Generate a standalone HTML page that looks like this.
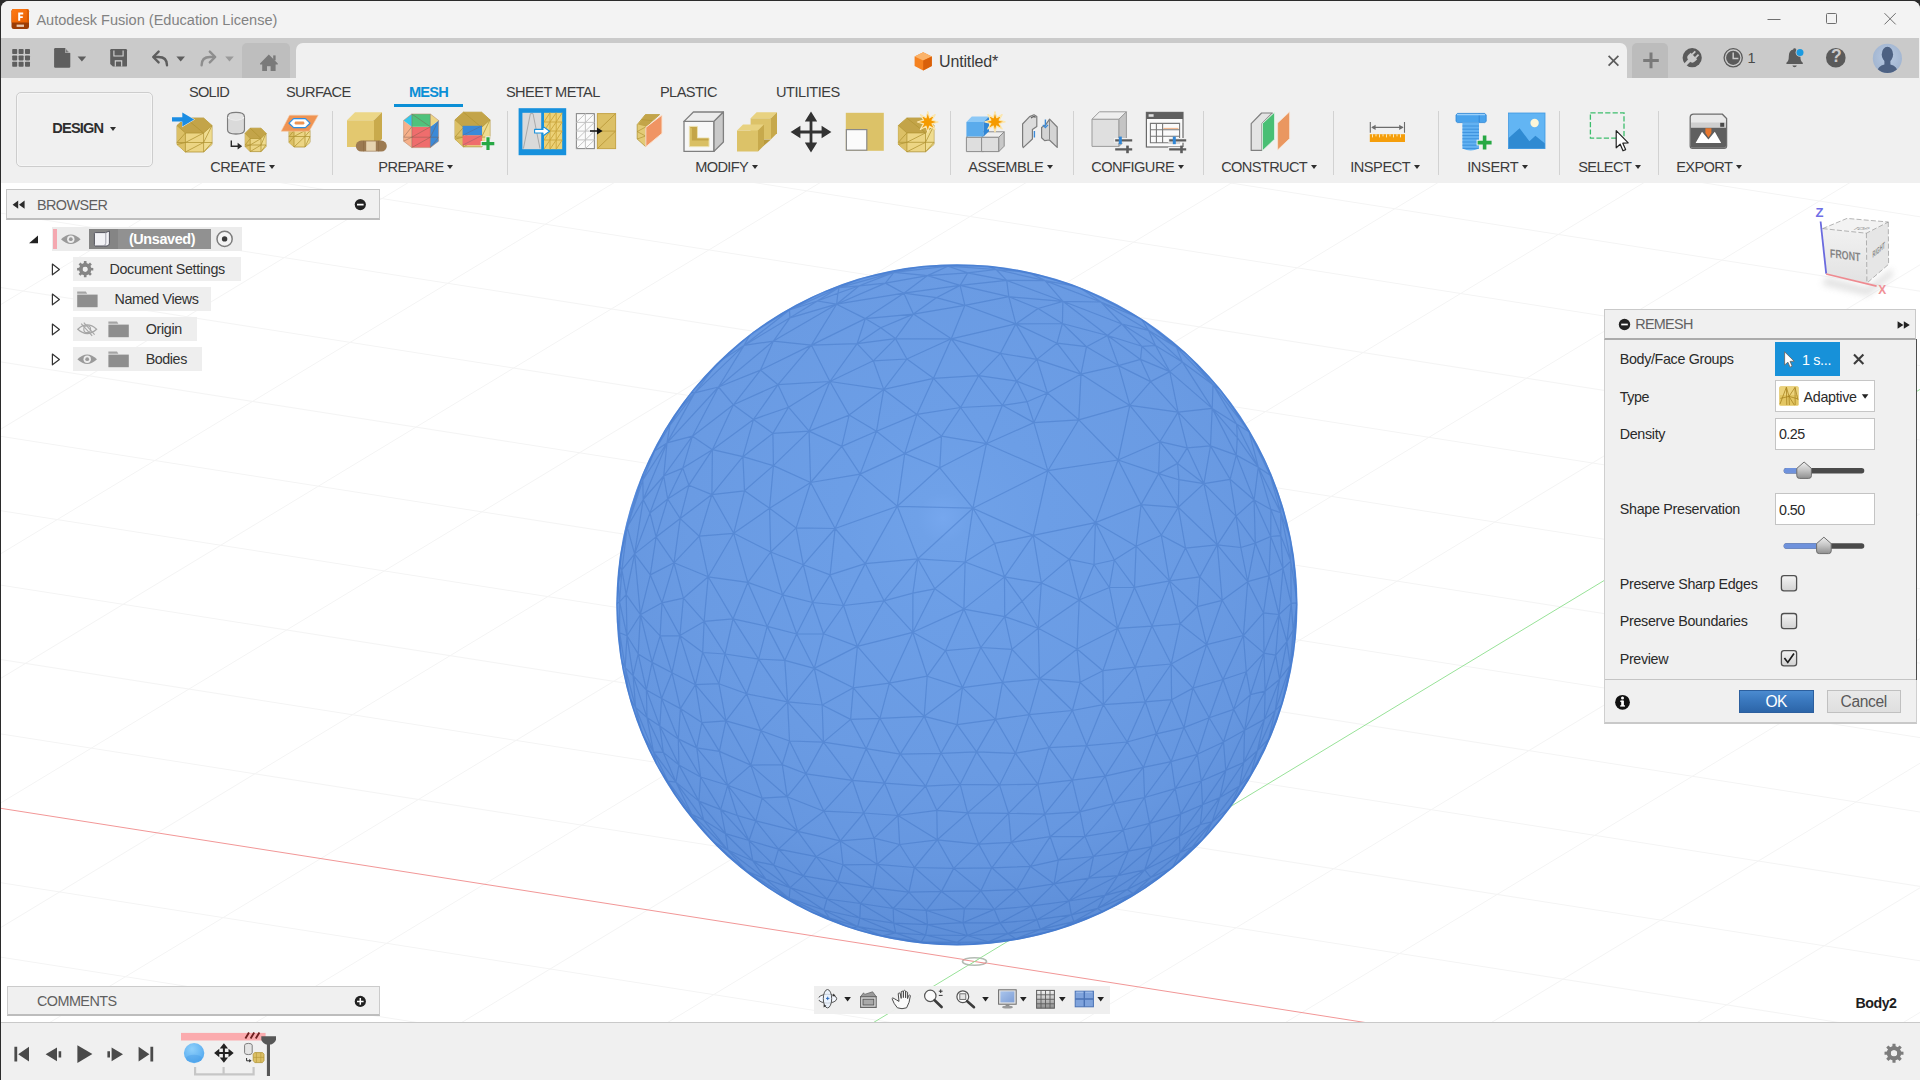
<!DOCTYPE html>
<html><head><meta charset="utf-8"><title>Autodesk Fusion</title>
<style>
*{box-sizing:border-box;margin:0;padding:0}
html,body{width:1920px;height:1080px;overflow:hidden;background:#2b2b2b;font-family:"Liberation Sans",sans-serif;}
#win{position:absolute;left:1px;top:1px;width:1919px;height:1079px;background:#f0f0f0;border-radius:8px 8px 0 0;overflow:hidden}
.abs{position:absolute}
#title{left:0;top:0;width:1920px;height:38px;background:#f3f3f3}
#title .t{left:36.4px;top:11.8px;font-size:14.55px;color:#828282;white-space:nowrap}
#qat{left:0;top:38px;width:1918.5px;height:40px;background:#cacaca}
#tab{left:296px;top:5px;width:1331px;height:35px;background:#f0f0f0;border-radius:7px 7px 0 0}
#ribbon{left:0;top:0;width:1920px;height:183px;background:transparent}
#ribbonbg{left:0;top:78px;width:1920px;height:105px;background:#f0f0f0}
#canvas{left:0;top:183px;width:1920px;height:840px;background:#fff}
#bottom{left:0;top:1022px;width:1920px;height:58px;background:#f0f0f0;border-top:1px solid #c9c9c9}
.rt{position:absolute;top:8px;font-size:14.5px;color:#3c3c3c;white-space:nowrap;letter-spacing:-0.2px}
.gl{position:absolute;top:82px;font-size:14.5px;color:#3c3c3c;white-space:nowrap;letter-spacing:-0.2px}
.gl i{display:inline-block;width:0;height:0;border-left:3.5px solid transparent;border-right:3.5px solid transparent;border-top:5px solid #333;margin-left:4px;vertical-align:2px}
.sep{position:absolute;top:34px;width:1px;height:63px;background:#cfcfcf}
</style></head><body>
<div id="win"><div id="o" class="abs" style="left:-1px;top:-1px;width:1920px;height:1080px">
<div id="title" class="abs"><div class="t abs">Autodesk Fusion (Education License)</div>
<svg class="abs" style="left:0;top:0" width="1920" height="38" viewBox="0 0 1920 38">
<defs><linearGradient id="fo" x1="0" y1="0" x2="1" y2="1"><stop offset="0" stop-color="#ff7a14"/><stop offset="1" stop-color="#e85f00"/></linearGradient></defs>
<rect x="11.5" y="9" width="17.5" height="20" rx="2.2" fill="#9c3d06"/>
<path d="M13.7 9H26.8Q29 9 29 11.2V22.6H11.5V11.2Q11.5 9 13.7 9Z" fill="url(#fo)"/>
<path d="M26.5 9.4Q28.6 9.6 28.7 12V22.6H27.3V11.5Z" fill="#c85200" opacity=".7"/>
<path d="M18.2 12.6H23.2V14.4H20.2V16.2H22.8V17.9H20.2V20.8H18.2Z" fill="#fff"/>
<rect x="16.6" y="24.6" width="7.4" height="2.3" fill="#f3d9c4" opacity=".9"/>
<path d="M1767.5 19.5H1780.5" stroke="#6f6f6f" stroke-width="1"/>
<rect x="1826.5" y="13.5" width="10" height="10" rx="1" fill="none" stroke="#6f6f6f" stroke-width="1"/>
<path d="M1884.5 13.2L1895.7 24.4M1895.7 13.2L1884.5 24.4" stroke="#6f6f6f" stroke-width="1"/>
</svg>

</div>
<div id="qat" class="abs"><div id="tab" class="abs"></div>
<div class="abs" style="left:242px;top:5px;width:48px;height:35px;background:#bebebe;border-radius:5px 5px 0 0"></div>
<div class="abs" style="left:1632px;top:5px;width:36px;height:35px;background:#bcbcbc;border-radius:5px 5px 0 0"></div>
<svg class="abs" style="left:0;top:0" width="1920" height="40" viewBox="0 38 1920 40">
<!-- grid -->
<g fill="#5e5e5e">
<rect x="12.2" y="49" width="5" height="5" rx=".8"/><rect x="18.6" y="49" width="5" height="5" rx=".8"/><rect x="25" y="49" width="5" height="5" rx=".8"/>
<rect x="12.2" y="55.4" width="5" height="5" rx=".8"/><rect x="18.6" y="55.4" width="5" height="5" rx=".8"/><rect x="25" y="55.4" width="5" height="5" rx=".8"/>
<rect x="12.2" y="61.8" width="5" height="5" rx=".8"/><rect x="18.6" y="61.8" width="5" height="5" rx=".8"/><rect x="25" y="61.8" width="5" height="5" rx=".8"/>
</g>
<!-- file -->
<path d="M55.3 48H65L70.3 53.3V66.6Q70.3 67.8 69.1 67.8H55.3Q54.1 67.8 54.1 66.6V49.2Q54.1 48 55.3 48Z" fill="#5e5e5e"/>
<path d="M65.4 48.2V53H70.2Z" fill="#cacaca"/><path d="M66 49.6V52.4H68.9Z" fill="#7a7a7a"/>
<path d="M77.6 56.6H86.2L81.9 61.4Z" fill="#5e5e5e"/>
<!-- save -->
<path d="M111.4 49H125.8Q127 49 127 50.2V65.4Q127 66.6 125.800 66.6H112.9L110.2 63.9V50.2Q110.2 49 111.4 49Z" fill="#5e5e5e"/>
<path d="M113.9 50.4V56H123.1V50.4" fill="none" stroke="#d4d4d4" stroke-width="1.1"/>
<path d="M115.3 66.4V60.9H121.7V66.4" fill="none" stroke="#d4d4d4" stroke-width="1.1"/>
<!-- undo -->
<path d="M167 65.2Q167 57 158.5 57H154" fill="none" stroke="#5e5e5e" stroke-width="2.4" stroke-linecap="round"/>
<path d="M158.6 51.6L153.2 57L158.6 62.4" fill="none" stroke="#5e5e5e" stroke-width="2.4" stroke-linecap="round" stroke-linejoin="round"/>
<path d="M176.4 56.6H185L180.7 61.4Z" fill="#5e5e5e"/>
<!-- redo -->
<path d="M201.6 65.2Q201.6 57 210 57H214" fill="none" stroke="#8e8e8e" stroke-width="2.4" stroke-linecap="round"/>
<path d="M209.8 51.6L215.2 57L209.8 62.4" fill="none" stroke="#8e8e8e" stroke-width="2.4" stroke-linecap="round" stroke-linejoin="round"/>
<path d="M225.2 56.6H233.8L229.5 61.4Z" fill="#9a9a9a"/>
<!-- home -->
<path d="M260 63.6L268.8 54.6L277.8 63.6V64.6H275.6V71H262.2V64.6H260Z" fill="#7a7a7a"/>
<rect x="273.2" y="55.4" width="2.4" height="5" fill="#7a7a7a"/>
<rect x="267" y="66.2" width="3.6" height="4.8" fill="#bebebe"/>
<!-- tab cube -->
<path d="M923.2 52.2L931.8 56.4V66L923.2 70.4L914.6 66V56.4Z" fill="#f58220"/>
<path d="M923.2 52.2L931.8 56.4L923.2 60.6L914.6 56.4Z" fill="#fbb36a"/>
<path d="M923.2 60.6L931.8 56.4V66L923.2 70.4Z" fill="#d9600a"/>
<!-- close x -->
<path d="M1608.6 55.8L1618.4 65.6M1618.4 55.8L1608.6 65.6" stroke="#5c5c5c" stroke-width="1.7"/>
<!-- plus -->
<path d="M1643.2 60.4H1658.8M1651 52.6V68.2" stroke="#7a7a7a" stroke-width="3"/>
<!-- extension -->
<circle cx="1692.2" cy="57.7" r="9.6" fill="#5a5a5a"/>
<g transform="rotate(45 1692.2 57.7)" fill="#cacaca">
<path d="M1687.6 55.2H1696.8V58.6Q1696.8 62.2 1692.2 62.2Q1687.6 62.2 1687.6 58.6Z"/>
<rect x="1689" y="51" width="1.8" height="4.6"/><rect x="1693.6" y="51" width="1.8" height="4.6"/>
<rect x="1690.6" y="61.6" width="3.2" height="8"/>
</g>
<!-- clock -->
<circle cx="1733.2" cy="57.8" r="9.1" fill="none" stroke="#5a5a5a" stroke-width="1.3"/>
<circle cx="1733.2" cy="57.8" r="7.1" fill="#5a5a5a"/>
<path d="M1733.2 52.4V58.6H1738.4" fill="none" stroke="#cacaca" stroke-width="1.5"/>
<!-- bell -->
<path d="M1794.6 48.2Q1796 48.2 1796 49.6Q1800.4 50.8 1800.4 56.4Q1800.4 61 1802.8 62.8V64H1786.4V62.8Q1788.8 61 1788.8 56.4Q1788.8 50.8 1793.2 49.6Q1793.2 48.2 1794.6 48.2Z" fill="#5a5a5a"/>
<path d="M1792.4 65.4H1796.8Q1796.4 67.2 1794.6 67.2Q1792.8 67.2 1792.4 65.4Z" fill="#5a5a5a"/>
<circle cx="1800" cy="52.4" r="4.4" fill="#cacaca"/><circle cx="1800" cy="52.4" r="3.5" fill="#1b9ae0"/>
<!-- help -->
<circle cx="1835.8" cy="57.8" r="9.8" fill="#5a5a5a"/>
<!-- avatar -->
<defs><clipPath id="avc"><circle cx="1887.4" cy="58.4" r="14.6"/></clipPath><radialGradient id="avg" cx=".5" cy=".45" r=".6"><stop offset="0" stop-color="#b9cae2"/><stop offset="1" stop-color="#9fb3cf"/></radialGradient></defs>
<circle cx="1887.4" cy="58.4" r="14.6" fill="url(#avg)"/>
<g clip-path="url(#avc)" fill="#4d6182"><ellipse cx="1887.4" cy="54.4" rx="5.7" ry="7.6"/><path d="M1884.4 59H1890.4V64.4Q1897.4 65.6 1898.4 74H1876.4Q1877.4 65.6 1884.4 64.4Z"/></g>
</svg>
<div class="abs" style="left:939px;top:15.2px;font-size:16px;color:#3a3a3a;letter-spacing:-0.15px">Untitled*</div>
<div class="abs" style="left:1747.5px;top:11.5px;font-size:14.5px;color:#4a4a4a">1</div>
<div class="abs" style="left:1831.1px;top:8.2px;font-size:17.5px;font-weight:bold;color:#cacaca">?</div>

</div>
<div id="ribbonbg" class="abs"></div><div id="ribbon" class="abs">
<div class="abs" style="left:188.9px;top:84px;font-size:14.6px;line-height:16px;color:#3c3c3c;letter-spacing:-0.703px;white-space:nowrap">SOLID</div>
<div class="abs" style="left:285.9px;top:84px;font-size:14.6px;line-height:16px;color:#3c3c3c;letter-spacing:-0.609px;white-space:nowrap">SURFACE</div>
<div class="abs" style="left:408.9px;top:84px;font-size:14.6px;line-height:16px;font-weight:bold;color:#0b8fd6;letter-spacing:-0.796px;white-space:nowrap">MESH</div>
<div class="abs" style="left:505.9px;top:84px;font-size:14.6px;line-height:16px;color:#3c3c3c;letter-spacing:-0.551px;white-space:nowrap">SHEET METAL</div>
<div class="abs" style="left:659.9px;top:84px;font-size:14.6px;line-height:16px;color:#3c3c3c;letter-spacing:-0.550px;white-space:nowrap">PLASTIC</div>
<div class="abs" style="left:775.9px;top:84px;font-size:14.6px;line-height:16px;color:#3c3c3c;letter-spacing:-0.460px;white-space:nowrap">UTILITIES</div>
<div class="abs" style="left:394px;top:103.5px;width:69px;height:3.5px;background:#0b8fd6"></div>
<div class="abs" style="left:16px;top:91.5px;width:137px;height:75px;border:1px solid #cdcdcd;border-radius:5px;background:#f0f0f0;box-shadow:0 0 0 1px #f6f6f6 inset"></div>
<div class="abs" style="left:52.3px;top:120px;font-size:14.6px;line-height:16px;font-weight:bold;color:#2e2e2e;letter-spacing:-0.830px">DESIGN</div>
<div class="abs" style="left:109.5px;top:126.5px;width:0;height:0;border-left:3.5px solid transparent;border-right:3.5px solid transparent;border-top:4.5px solid #2e2e2e"></div>
<div class="abs" style="left:210.2px;top:159px;font-size:14.6px;line-height:16px;color:#3c3c3c;letter-spacing:-0.523px;white-space:nowrap">CREATE</div>
<div class="abs" style="left:268.6px;top:164.5px;width:0;height:0;border-left:3.4px solid transparent;border-right:3.4px solid transparent;border-top:4.6px solid #2e2e2e"></div>
<div class="abs" style="left:378.2px;top:159px;font-size:14.6px;line-height:16px;color:#3c3c3c;letter-spacing:-0.457px;white-space:nowrap">PREPARE</div>
<div class="abs" style="left:447.1px;top:164.5px;width:0;height:0;border-left:3.4px solid transparent;border-right:3.4px solid transparent;border-top:4.6px solid #2e2e2e"></div>
<div class="abs" style="left:695.2px;top:159px;font-size:14.6px;line-height:16px;color:#3c3c3c;letter-spacing:-0.629px;white-space:nowrap">MODIFY</div>
<div class="abs" style="left:751.6px;top:164.5px;width:0;height:0;border-left:3.4px solid transparent;border-right:3.4px solid transparent;border-top:4.6px solid #2e2e2e"></div>
<div class="abs" style="left:968.2px;top:159px;font-size:14.6px;line-height:16px;color:#3c3c3c;letter-spacing:-0.464px;white-space:nowrap">ASSEMBLE</div>
<div class="abs" style="left:1046.6px;top:164.5px;width:0;height:0;border-left:3.4px solid transparent;border-right:3.4px solid transparent;border-top:4.6px solid #2e2e2e"></div>
<div class="abs" style="left:1091.2px;top:159px;font-size:14.6px;line-height:16px;color:#3c3c3c;letter-spacing:-0.511px;white-space:nowrap">CONFIGURE</div>
<div class="abs" style="left:1177.6px;top:164.5px;width:0;height:0;border-left:3.4px solid transparent;border-right:3.4px solid transparent;border-top:4.6px solid #2e2e2e"></div>
<div class="abs" style="left:1221.2px;top:159px;font-size:14.6px;line-height:16px;color:#3c3c3c;letter-spacing:-0.628px;white-space:nowrap">CONSTRUCT</div>
<div class="abs" style="left:1310.6px;top:164.5px;width:0;height:0;border-left:3.4px solid transparent;border-right:3.4px solid transparent;border-top:4.6px solid #2e2e2e"></div>
<div class="abs" style="left:1350.2px;top:159px;font-size:14.6px;line-height:16px;color:#3c3c3c;letter-spacing:-0.468px;white-space:nowrap">INSPECT</div>
<div class="abs" style="left:1413.6px;top:164.5px;width:0;height:0;border-left:3.4px solid transparent;border-right:3.4px solid transparent;border-top:4.6px solid #2e2e2e"></div>
<div class="abs" style="left:1467.2px;top:159px;font-size:14.6px;line-height:16px;color:#3c3c3c;letter-spacing:-0.379px;white-space:nowrap">INSERT</div>
<div class="abs" style="left:1521.6px;top:164.5px;width:0;height:0;border-left:3.4px solid transparent;border-right:3.4px solid transparent;border-top:4.6px solid #2e2e2e"></div>
<div class="abs" style="left:1578.2px;top:159px;font-size:14.6px;line-height:16px;color:#3c3c3c;letter-spacing:-0.633px;white-space:nowrap">SELECT</div>
<div class="abs" style="left:1634.6px;top:164.5px;width:0;height:0;border-left:3.4px solid transparent;border-right:3.4px solid transparent;border-top:4.6px solid #2e2e2e"></div>
<div class="abs" style="left:1676.2px;top:159px;font-size:14.6px;line-height:16px;color:#3c3c3c;letter-spacing:-0.628px;white-space:nowrap">EXPORT</div>
<div class="abs" style="left:1735.6px;top:164.5px;width:0;height:0;border-left:3.4px solid transparent;border-right:3.4px solid transparent;border-top:4.6px solid #2e2e2e"></div>
<div class="abs" style="left:331.9px;top:111px;width:1.3px;height:64px;background:#d2d2d2"></div>
<div class="abs" style="left:506.7px;top:111px;width:1.3px;height:64px;background:#d2d2d2"></div>
<div class="abs" style="left:950.2px;top:111px;width:1.3px;height:64px;background:#d2d2d2"></div>
<div class="abs" style="left:1072.7px;top:111px;width:1.3px;height:64px;background:#d2d2d2"></div>
<div class="abs" style="left:1202.9px;top:111px;width:1.3px;height:64px;background:#d2d2d2"></div>
<div class="abs" style="left:1333.0px;top:111px;width:1.3px;height:64px;background:#d2d2d2"></div>
<div class="abs" style="left:1438.0px;top:111px;width:1.3px;height:64px;background:#d2d2d2"></div>
<div class="abs" style="left:1559.0px;top:111px;width:1.3px;height:64px;background:#d2d2d2"></div>
<div class="abs" style="left:1658.0px;top:111px;width:1.3px;height:64px;background:#d2d2d2"></div><svg class="abs" style="left:0;top:0" width="1920" height="183" viewBox="0 0 1920 183">
<path d="M177.0 125.5L185.4 118.0L203.6 118.0L212.0 125.5L212.0 144.5L203.6 152.0L185.4 152.0L177.0 144.5Z" fill="#ecd584" stroke="#b39535" stroke-width=".8" stroke-linejoin="round"/><path d="M177.0 125.5L185.4 118.0L203.6 118.0L212.0 125.5L203.6 133.0L185.4 133.0Z" fill="#c3a449"/><path d="M177.0 125.5L185.4 133.0L185.4 152.0L177.0 144.5Z" fill="#dcc066"/><path d="M212.0 125.5L203.6 133.0L203.6 152.0L212.0 144.5Z" fill="#f3e19b" opacity=".55"/><path d="M185.4 133.0L185.4 152.0M203.6 133.0L203.6 152.0M177.0 142.5L212.0 142.5M185.4 142.5L203.6 133.0M185.4 152.0L203.6 142.5M177.0 142.5L185.4 133.0M177.0 144.5L185.4 142.5M203.6 142.5L212.0 125.5M203.6 152.0L212.0 142.5M185.4 133.0L203.6 133.0M185.4 118.0L203.6 133.0M177.0 125.5L185.4 133.0M212.0 125.5L203.6 133.0" fill="none" stroke="#b39535" stroke-width=".8"/>
<path d="M171.5 117H182V111.8L195 119.4L182 127.2V121.8H171.5Z" fill="#f0f0f0"/>
<path d="M172 117.3H182.3V112.6L194.2 119.5L182.3 126.5V121.6H172Z" fill="#1b8de3"/>
<path d="M227.6 116.5V130Q227.6 134 236 134Q244.4 134 244.4 130V116.5Q244.4 112.4 236 112.4Q227.6 112.4 227.6 116.5Z" fill="#e4e4e4" stroke="#7d7d7d" stroke-width="1.3"/>
<path d="M228.3 117Q228.3 120.6 236 120.6Q243.7 120.6 243.7 117" fill="none" stroke="#f7f7f7" stroke-width="1.2"/>
<path d="M228.6 117V129.6Q229 133 236 133Q243 133 243.4 129.6V117Q243.4 120.4 236 120.4Q228.6 120.4 228.6 117Z" fill="#dadada"/>
<path d="M245.2 133.3L250.2 128.2L261.0 128.2L266.0 133.3L266.0 146.5L261.0 151.6L250.2 151.6L245.2 146.5Z" fill="#ecd584" stroke="#b39535" stroke-width=".8" stroke-linejoin="round"/><path d="M245.2 133.3L250.2 128.2L261.0 128.2L266.0 133.3L261.0 138.5L250.2 138.5Z" fill="#c3a449"/><path d="M245.2 133.3L250.2 138.5L250.2 151.6L245.2 146.5Z" fill="#dcc066"/><path d="M266.0 133.3L261.0 138.5L261.0 151.6L266.0 146.5Z" fill="#f3e19b" opacity=".55"/><path d="M250.2 138.5L250.2 151.6M261.0 138.5L261.0 151.6M245.2 145.0L266.0 145.0M250.2 145.0L261.0 138.5M250.2 151.6L261.0 145.0M245.2 145.0L250.2 138.5M245.2 146.5L250.2 145.0M261.0 145.0L266.0 133.3M261.0 151.6L266.0 145.0M250.2 138.5L261.0 138.5M250.2 128.2L261.0 138.5M245.2 133.3L250.2 138.5M266.0 133.3L261.0 138.5" fill="none" stroke="#b39535" stroke-width=".8"/>
<path d="M231.3 140.6V146.2H238.6" fill="none" stroke="#2b2b2b" stroke-width="1.4"/><path d="M237.6 142.8L242.2 146.2L237.6 149.6Z" fill="#2b2b2b"/>
<path d="M289.0 130.6L294.0 126.0L305.0 126.0L310.0 130.6L310.0 142.4L305.0 147.0L294.0 147.0L289.0 142.4Z" fill="#ecd584" stroke="#b39535" stroke-width=".8" stroke-linejoin="round"/><path d="M289.0 130.6L294.0 130.6L294.0 147.0L289.0 142.4Z" fill="#dcc066"/><path d="M310.0 130.6L305.0 130.6L305.0 147.0L310.0 142.4Z" fill="#f3e19b" opacity=".55"/><path d="M294.0 130.6L294.0 147.0M305.0 130.6L305.0 147.0M289.0 136.5L310.0 136.5M294.0 136.5L305.0 130.6M294.0 147.0L305.0 136.5M289.0 136.5L294.0 130.6M289.0 142.4L294.0 136.5M305.0 136.5L310.0 130.6M305.0 147.0L310.0 136.5" fill="none" stroke="#b39535" stroke-width=".8"/>
<path d="M289.5 115.2H318.2L309.2 131.2H281.2Z" fill="#ef9352" stroke="#f6c9a3" stroke-width=".6"/>
<path d="M289 123.2L293.6 118.6H305.4L310 123.2L305.4 127.6H293.6Z" fill="#fff" stroke="#2f8de0" stroke-width="1.2" stroke-linejoin="round"/>
<rect x="294.6" y="121.6" width="9.8" height="3" rx="1.4" fill="#ef9352"/>
<path d="M347.0 120.2L374.0 120.2L374.0 147.0L347.0 147.0Z" fill="#e3c86f"/><path d="M347.0 120.2L355.0 112.2L382.0 112.2L374.0 120.2Z" fill="#ecd788"/><path d="M374.0 120.2L382.0 112.2L382.0 139.0L374.0 147.0Z" fill="#c9aa4c"/>
<rect x="355.8" y="140.6" width="31" height="11" rx="5.5" fill="#9c7a52"/><rect x="366.2" y="141.4" width="9.6" height="9.4" fill="#e6d3b0"/>
<path d="M363.6 140.8V151.4M378.6 140.8V151.4" stroke="#8a6940" stroke-width="1" opacity=".6"/>
<path d="M411.8 126.8L430.4 126.8L430.4 147.6L411.8 147.6Z" fill="#ef6d6d"/>
<path d="M403.6 120.4L411.8 126.8L411.8 147.6L403.6 141.2Z" fill="#f6b08a"/>
<path d="M438.6 120.4L430.4 126.8L430.4 147.6L438.6 141.2Z" fill="#3b8ad8"/>
<path d="M411.8 114.0L430.4 114.0L430.4 126.8L411.8 126.8Z" fill="#4fc27c"/>
<path d="M403.6 120.4L411.8 114.0L411.8 126.8Z" fill="#35c6ea"/>
<path d="M438.6 120.4L430.4 114.0L430.4 126.8Z" fill="#ecd584"/>
<path d="M411.8 114.0L430.4 126.8M403.6 137.2H438.6M411.8 137.2L430.4 126.8M411.8 147.6L430.4 137.2M403.6 137.2L411.8 126.8M403.6 141.2L411.8 137.2M430.4 137.2L438.6 120.4M430.4 147.6L438.6 137.2M411.8 114.0V147.6M430.4 114.0V147.6" fill="none" stroke="#7a5a4a" stroke-opacity=".55" stroke-width=".8"/>
<path d="M403.6 120.4L411.8 114.0L430.4 114.0L438.6 120.4L438.6 141.2L430.4 147.6L411.8 147.6L403.6 141.2Z" fill="none" stroke="#b98a6a" stroke-opacity=".7" stroke-width=".8"/>
<path d="M455.0 119.8L463.4 112.2L481.6 112.2L490.0 119.8L490.0 139.2L481.6 146.8L463.4 146.8L455.0 139.2Z" fill="#ecd584" stroke="#b39535" stroke-width=".8" stroke-linejoin="round"/><path d="M455.0 119.8L463.4 112.2L481.6 112.2L490.0 119.8L481.6 127.4L463.4 127.4Z" fill="#c3a449"/><path d="M455.0 119.8L463.4 127.4L463.4 146.8L455.0 139.2Z" fill="#dcc066"/><path d="M490.0 119.8L481.6 127.4L481.6 146.8L490.0 139.2Z" fill="#f3e19b" opacity=".55"/><path d="M463.4 127.4L463.4 146.8M481.6 127.4L481.6 146.8M455.0 137.1L490.0 137.1M463.4 137.1L481.6 127.4M463.4 146.8L481.6 137.1M455.0 137.1L463.4 127.4M455.0 139.2L463.4 137.1M481.6 137.1L490.0 119.8M481.6 146.8L490.0 137.1M463.4 127.4L481.6 127.4M463.4 112.2L481.6 127.4M455.0 119.8L463.4 127.4M490.0 119.8L481.6 127.4" fill="none" stroke="#b39535" stroke-width=".8"/>
<rect x="462.6" y="125.8" width="19.4" height="9.6" fill="#3b8ad8"/><rect x="462.6" y="135.4" width="19.4" height="9.8" fill="#ef6d6d"/>
<path d="M462.6 135.4L482 125.8M462.6 145.2L482 135.4" stroke="#6a5a6a" stroke-opacity=".45" stroke-width=".8"/>
<path d="M480.7 143.6H495.3M488.0 136.3V150.9" stroke="#f0f0f0" stroke-width="5.2"/><path d="M481.7 143.6H494.3M488.0 137.3V149.9" stroke="#27a844" stroke-width="3.2"/>
<rect x="518.6" y="108.2" width="47.6" height="47" fill="#1791dd"/>
<rect x="522.4" y="112.8" width="18.8" height="36.4" fill="#dadada"/><rect x="544" y="112.8" width="18.2" height="36.4" fill="#ecd177"/>
<path d="M523.4 148.6L530.4 113.6H533L540 148.6" fill="none" stroke="#a9a9a9" stroke-width="1"/>
<path d="M550 112.8V149.2M556.2 112.8V149.2M544 122H562.2M544 131H562.2M544 140H562.2M544 122L550 112.8M550 122L556.2 112.8M556.2 122L562.2 112.8M544 131L550 122M550 131L556.2 122M556.2 131L562.2 122M544 140L550 131M550 140L556.2 131M556.2 140L562.2 131M544 149.2L550 140M550 149.2L556.2 140M556.2 149.2L562.2 140" stroke="#c9a53c" stroke-width=".9" fill="none"/>
<path d="M534.6 129.4H543V126.4L549.6 131.2L543 136V133H534.6Z" fill="#fff" stroke="#1791dd" stroke-width="1.1" stroke-linejoin="round"/>
<rect x="576.4" y="113.6" width="18" height="35" fill="#fbfbfb" stroke="#8c8c8c" stroke-width="1.1"/>
<path d="M585.4 113.6V148.6M576.4 122.4H594.4M576.4 131.1H594.4M576.4 139.9H594.4M576.4 122.4L585.4 113.6M585.4 122.4L594.4 113.6M576.4 131.1L585.4 122.4M585.4 131.1L594.4 122.4M576.4 139.9L585.4 131.1M585.4 139.9L594.4 131.1M576.4 148.6L585.4 139.9M585.4 148.6L594.4 139.9" stroke="#bdbdbd" stroke-width=".9" fill="none"/>
<rect x="597.4" y="113.6" width="18.2" height="35" fill="#dcc066" stroke="#c5a548" stroke-width="1"/>
<path d="M597.4 131.1H615.6M597.4 131.1L615.6 113.6M597.4 148.6L615.6 131.1" stroke="#bb9a3a" stroke-width=".9" fill="none"/>
<path d="M590 131.1H598" stroke="#111" stroke-width="1.5"/><path d="M597 127.6L602.6 131.1L597 134.6Z" fill="#111"/>
<path d="M637.2 124.6L645.4 114.6L659.6 114.6L645.6 127.0L645.6 146.6L637.2 139.0Z" fill="#e3cb76" stroke="#b39535" stroke-width=".8" stroke-linejoin="round"/>
<path d="M645.4 114.8L659.0 114.8L646.0 126.6L638.0 124.4Z" fill="#c3a449"/>
<path d="M637.2 131.6L645.6 136M637.2 131.6L645.6 127M637.2 139L645.6 136M641.4 119.6L652.4 120.6" stroke="#b39535" stroke-width=".7" fill="none"/>
<path d="M645.8 127.4L662.0 115.0L662.0 133.4L645.8 146.8Z" fill="#f09463" stroke="#fbe3cf" stroke-width="1" stroke-linejoin="round"/>
<path d="M684.0 121.4L714.0 121.4L714.0 151.4L684.0 151.4Z" fill="#f7f7f7" stroke="#7f7f7f" stroke-width="1.3" stroke-linejoin="round"/><path d="M684.0 121.4L693.4 112.0L723.4 112.0L714.0 121.4Z" fill="#ececec" stroke="#7f7f7f" stroke-width="1.3" stroke-linejoin="round"/><path d="M714.0 121.4L723.4 112.0L723.4 142.0L714.0 151.4Z" fill="#c9c9c9" stroke="#7f7f7f" stroke-width="1.3" stroke-linejoin="round"/>
<path d="M689.4 126.4L697.4 126.4L697.4 138.0L709.0 138.0L709.0 146.6L689.4 146.6Z" fill="#d9bf63" stroke="#eadfae" stroke-width="1"/>
<path d="M689.9 126.9L696.9 126.9L696.9 138.5L708.5 138.5L708.5 140.5L691.9 140.5L691.9 128.5Z" fill="#c4a548"/>
<path d="M750.6 118.2L771.0 118.2L771.0 139.2L750.6 139.2Z" fill="#dcc268"/><path d="M750.6 118.2L756.6 112.2L777.0 112.2L771.0 118.2Z" fill="#e8d281"/><path d="M771.0 118.2L777.0 112.2L777.0 133.2L771.0 139.2Z" fill="#c7a94c"/>
<path d="M737.0 130.6L758.0 130.6L758.0 151.6L737.0 151.6Z" fill="#dcc268"/><path d="M737.0 130.6L743.0 124.6L764.0 124.6L758.0 130.6Z" fill="#e8d281"/><path d="M758.0 130.6L764.0 124.6L764.0 145.6L758.0 151.6Z" fill="#c7a94c"/>
<path d="M764 139.4H771L764 145.6Z" fill="#b99a3e"/>
<path d="M811 118V146M797 132H825" stroke="#333" stroke-width="2.8"/>
<path d="M811 111.6L817.2 121.4H804.8ZM811 152.4L817.2 142.6H804.8ZM790.6 132L800.4 125.8V138.2ZM831.4 132L821.6 125.8V138.2Z" fill="#333"/>
<rect x="845.8" y="112.8" width="38" height="38" fill="#dcc268"/>
<rect x="846.4" y="129.6" width="20.4" height="20.6" fill="#fbfbfb" stroke="#8a8a8a" stroke-width="1.2"/>
<path d="M898.4 125.4L906.9 118.0L925.5 118.0L934.0 125.4L934.0 144.4L925.5 151.8L906.9 151.8L898.4 144.4Z" fill="#ecd584" stroke="#b39535" stroke-width=".8" stroke-linejoin="round"/><path d="M898.4 125.4L906.9 118.0L925.5 118.0L934.0 125.4L925.5 132.9L906.9 132.9Z" fill="#c3a449"/><path d="M898.4 125.4L906.9 132.9L906.9 151.8L898.4 144.4Z" fill="#dcc066"/><path d="M934.0 125.4L925.5 132.9L925.5 151.8L934.0 144.4Z" fill="#f3e19b" opacity=".55"/><path d="M906.9 132.9L906.9 151.8M925.5 132.9L925.5 151.8M898.4 142.3L934.0 142.3M906.9 142.3L925.5 132.9M906.9 151.8L925.5 142.3M898.4 142.3L906.9 132.9M898.4 144.4L906.9 142.3M925.5 142.3L934.0 125.4M925.5 151.8L934.0 142.3M906.9 132.9L925.5 132.9M906.9 118.0L925.5 132.9M898.4 125.4L906.9 132.9M934.0 125.4L925.5 132.9" fill="none" stroke="#b39535" stroke-width=".8"/>
<path d="M927.8 111.6L929.6 117.8L935.2 114.6L932.0 120.2L938.2 122.0L932.0 123.8L935.2 129.4L929.6 126.2L927.8 132.4L926.0 126.2L920.4 129.4L923.6 123.8L917.4 122.0L923.6 120.2L920.4 114.6L926.0 117.8Z" fill="#f59a00" stroke="#fbe7b0" stroke-width="1.2" stroke-linejoin="round"/>
<path d="M966.4 137.2L983.6 137.2L983.6 151.6L966.4 151.6Z" fill="#dedede" stroke="#8c8c8c" stroke-width="1" stroke-linejoin="round"/><path d="M966.4 137.2L971.8 131.8L989.0 131.8L983.6 137.2Z" fill="#efefef" stroke="#8c8c8c" stroke-width="1" stroke-linejoin="round"/><path d="M983.6 137.2L989.0 131.8L989.0 146.2L983.6 151.6Z" fill="#c8c8c8" stroke="#8c8c8c" stroke-width="1" stroke-linejoin="round"/>
<path d="M981.6 137.2L998.8 137.2L998.8 151.6L981.6 151.6Z" fill="#dedede" stroke="#8c8c8c" stroke-width="1" stroke-linejoin="round"/><path d="M981.6 137.2L987.0 131.8L1004.2 131.8L998.8 137.2Z" fill="#efefef" stroke="#8c8c8c" stroke-width="1" stroke-linejoin="round"/><path d="M998.8 137.2L1004.2 131.8L1004.2 146.2L998.8 151.6Z" fill="#c8c8c8" stroke="#8c8c8c" stroke-width="1" stroke-linejoin="round"/>
<path d="M966.4 122.0L983.6 122.0L983.6 136.6L966.4 136.6Z" fill="#5aabec"/><path d="M966.4 122.0L971.8 116.6L989.0 116.6L983.6 122.0Z" fill="#8cc8f6"/><path d="M983.6 122.0L989.0 116.6L989.0 131.2L983.6 136.6Z" fill="#2f86d6"/>
<path d="M995.0 111.6L996.7 117.6L1002.2 114.6L999.2 120.1L1005.2 121.8L999.2 123.5L1002.2 129.0L996.7 126.0L995.0 132.0L993.3 126.0L987.8 129.0L990.8 123.5L984.8 121.8L990.8 120.1L987.8 114.6L993.3 117.6Z" fill="#f59a00" stroke="#fbe7b0" stroke-width="1.2" stroke-linejoin="round"/>
<path d="M1022.6 124.0L1029.6 116.6L1034.0 114.8L1036.8 116.4L1036.8 126.4L1032.4 129.4L1032.4 139.0L1023.2 147.6L1022.6 146.0Z" fill="#dcdcdc" stroke="#7c7c7c" stroke-width="1.2" stroke-linejoin="round"/>
<path d="M1031 118.2Q1033.6 115.6 1035.6 117.4" fill="none" stroke="#555" stroke-width="1.2"/>
<path d="M1041.6 127.6L1046.0 124.4L1049.6 119.2L1057.2 127.0L1057.2 147.4L1049.4 140.0L1044.6 140.6L1041.6 137.8Z" fill="#d4d4d4" stroke="#7c7c7c" stroke-width="1.2" stroke-linejoin="round"/>
<path d="M1049.5 120V139.6" stroke="#8a8a8a" stroke-width="1"/>
<path d="M1034.4 131V137.6M1045.4 119.6V126.6" stroke="#3b8ad8" stroke-width="1.4"/><path d="M1042.8 124.8L1045.4 127.6L1048 124.8" stroke="#3b8ad8" stroke-width="1.2" fill="none"/>
<path d="M1092.0 119.2L1119.0 119.2L1119.0 146.4L1092.0 146.4Z" fill="#dfdfdf" stroke="#9b9b9b" stroke-width="1" stroke-linejoin="round"/><path d="M1092.0 119.2L1099.4 111.8L1126.4 111.8L1119.0 119.2Z" fill="#eeeeee" stroke="#9b9b9b" stroke-width="1" stroke-linejoin="round"/><path d="M1119.0 119.2L1126.4 111.8L1126.4 139.0L1119.0 146.4Z" fill="#c4c4c4" stroke="#9b9b9b" stroke-width="1" stroke-linejoin="round"/>
<path d="M1114.2 140.4H1133.2M1114.2 149.4H1133.2" stroke="#f0f0f0" stroke-width="4.6"/><path d="M1115.2 140.4H1132.2M1115.2 149.4H1132.2" stroke="#5c5c5c" stroke-width="2.2"/><rect x="1118.8" y="136.6" width="3" height="7.6" fill="#2f86d6"/><rect x="1126.2" y="145.6" width="2.6" height="7.6" fill="#5c5c5c"/>
<rect x="1146.4" y="112.4" width="36.6" height="34.6" fill="#fafafa" stroke="#6a6a6a" stroke-width="1.2"/>
<rect x="1146.4" y="112.4" width="36.6" height="6.6" fill="#5f5f5f"/><rect x="1148.6" y="114.2" width="5" height="2.6" fill="#e0e0e0"/>
<path d="M1150.4 123.4H1179.6V142.8H1150.4ZM1150.4 129.8H1179.6M1150.4 136.2H1179.6M1156.4 123.4V142.8M1162.6 123.4V142.8" fill="none" stroke="#777" stroke-width="1.1"/>
<path d="M1163.4 128.4H1178.4" stroke="#ef9352" stroke-width="1" opacity=".7"/>
<path d="M1168.2 140.4H1187.2M1168.2 149.4H1187.2" stroke="#f0f0f0" stroke-width="4.6"/><path d="M1169.2 140.4H1186.2M1169.2 149.4H1186.2" stroke="#5c5c5c" stroke-width="2.2"/><rect x="1172.8" y="136.6" width="3" height="7.6" fill="#2f86d6"/><rect x="1180.2" y="145.6" width="2.6" height="7.6" fill="#5c5c5c"/>
<path d="M1251.2 123.6L1261.6 113.0L1272.4 113.0L1262.0 123.6L1262.0 150.4L1251.2 150.4Z" fill="#e4e4e4" stroke="#7f7f7f" stroke-width="1.2" stroke-linejoin="round"/>
<path d="M1262.0 123.6L1272.0 113.4L1272.0 140.0L1262.0 150.0Z" fill="#c9c9c9"/>
<path d="M1262.4 123.6L1274.6 112.2L1274.6 139.2L1262.4 150.8Z" fill="#49bf74" stroke="#e9f7ee" stroke-width=".8"/>
<path d="M1277.6 123.0L1289.6 111.8L1289.6 138.6L1277.6 150.0Z" fill="#ea9760" stroke="#f8e4d4" stroke-width=".8"/>
<rect x="1369.8" y="134.2" width="35.2" height="7.8" fill="#f59e0b"/>
<path d="M1372.5 134.2V137.4M1376 134.2V136.4M1379.5 134.2V137.4M1383 134.2V136.4M1386.5 134.2V137.4M1390 134.2V136.4M1393.5 134.2V137.4M1397 134.2V136.4M1400.5 134.2V137.4" stroke="#fde9b8" stroke-width="1"/>
<path d="M1370.3 122V132.8M1404.5 122V132.8M1372 127.4H1403" stroke="#6c6c6c" stroke-width="1.1" fill="none"/>
<path d="M1371.2 127.4L1375.6 124.8V130ZM1403.6 127.4L1399.2 124.8V130Z" fill="#6c6c6c"/>
<path d="M1457.4 113.4H1484.8L1486.2 115V121.4L1484.8 122.6H1457.4L1456 121.4V115Z" fill="#4aa3ec" stroke="#2f86d6" stroke-width=".8"/>
<path d="M1479.2 113.6V122.4" stroke="#2f86d6" stroke-width=".9"/><path d="M1457 114.6H1485" stroke="#9bd0fa" stroke-width="1.2"/>
<path d="M1462.4 122.6H1479V148.4Q1470.6 152.4 1462.4 148.4Z" fill="#63b2f2"/>
<path d="M1462.4 126H1479M1462.4 129.2H1479M1462.4 132.4H1479M1462.4 135.6H1479M1462.4 138.8H1479M1462.4 142H1479M1462.4 145.2H1479M1462.6 148.4H1478.8" stroke="#2f86d6" stroke-width="1" opacity=".75"/>
<path d="M1476.6 142.6H1492.6M1484.6 134.6V150.6" stroke="#f0f0f0" stroke-width="5.6"/><path d="M1477.6 142.6H1491.6M1484.6 135.6V149.6" stroke="#27a844" stroke-width="3.6"/>
<rect x="1508.6" y="113" width="36.4" height="35.6" fill="#62b5f4"/>
<path d="M1508.6 148.6V138L1519.6 128.2L1529.4 141.2L1535.4 135.8L1545 143.6V148.6Z" fill="#2f8ad2"/>
<circle cx="1534.6" cy="123" r="4.2" fill="#fdf6d8"/>
<rect x="1508.6" y="113" width="36.4" height="35.6" fill="none" stroke="#3f98e0" stroke-width=".8"/>
<rect x="1590.4" y="112.8" width="33.6" height="25.4" fill="none" stroke="#3dbd6c" stroke-width="1.3" stroke-dasharray="5.2 2.2"/>
<path d="M1616.2 130.6V147.8L1620.2 144.2L1623 150.8L1625.6 149.6L1622.8 143.2L1628.2 142.8Z" fill="#fff" stroke="#222" stroke-width="1.2" stroke-linejoin="round"/>
<path d="M1693.6 114.2H1722.4L1726.6 118.6V146Q1726.6 148.4 1724.2 148.4H1692.6Q1690.2 148.4 1690.2 146V117.6Q1690.2 114.2 1693.6 114.2Z" fill="#e9e9e9" stroke="#6c6c6c" stroke-width="1.3"/>
<path d="M1691 122.6H1726V127.8H1691Z" fill="#cfcfcf"/>
<path d="M1690.8 127.8H1726V146Q1726 147.8 1724.2 147.8H1692.6Q1690.8 147.8 1690.8 146Z" fill="#5f5f5f"/>
<rect x="1720.2" y="122.8" width="4" height="4" fill="#4a4a4a"/>
<path d="M1695.6 143H1721.2L1714.8 131.8L1708.4 139.6L1702 131.8Z" fill="#fff"/>
<path d="M1705.4 128.2H1711.4V133L1708.4 137.6L1705.4 133Z" fill="#e8772e"/>
</svg>
</div>
<div id="canvas" class="abs">
<svg class="abs" style="left:0;top:0" width="1920" height="840" viewBox="0 183 1920 840">
<path d="M0.0 -233.4L1920.0 68.0M0.0 -159.0L1920.0 142.4M0.0 -84.6L1920.0 216.8M0.0 -10.2L1920.0 291.2M0.0 64.2L1920.0 365.6M0.0 138.6L1920.0 440.0M0.0 213.0L1920.0 514.4M0.0 287.4L1920.0 588.8M0.0 361.8L1920.0 663.2M0.0 436.2L1920.0 737.6M0.0 510.6L1920.0 812.0M0.0 585.0L1920.0 886.4M0.0 659.4L1920.0 960.8M0.0 733.8L1920.0 1035.2M0.0 882.6L1920.0 1184.0M0.0 957.0L1920.0 1258.4M0.0 1031.4L1920.0 1332.8M0.0 1105.8L1920.0 1407.2M0.0 1180.2L1920.0 1481.6M0.0 2547.8L1920.0 1386.2M0.0 2423.2L1920.0 1261.6M0.0 2298.6L1920.0 1137.0M0.0 2174.0L1920.0 1012.4M0.0 2049.4L1920.0 887.8M0.0 1924.8L1920.0 763.2M0.0 1800.2L1920.0 638.6M0.0 1675.6L1920.0 514.0M0.0 1426.4L1920.0 264.8M0.0 1301.8L1920.0 140.2M0.0 1177.2L1920.0 15.6M0.0 1052.6L1920.0 -109.0M0.0 928.0L1920.0 -233.6M0.0 803.4L1920.0 -358.2M0.0 678.8L1920.0 -482.8M0.0 554.2L1920.0 -607.4M0.0 429.6L1920.0 -732.0M0.0 305.0L1920.0 -856.6M0.0 180.4L1920.0 -981.2M0.0 55.8L1920.0 -1105.8M0.0 -68.8L1920.0 -1230.4M0.0 -193.4L1920.0 -1355.0M0.0 -318.0L1920.0 -1479.6M0.0 -442.6L1920.0 -1604.2M0.0 -567.2L1920.0 -1728.8M0.0 -691.8L1920.0 -1853.4M0.0 -816.4L1920.0 -1978.0" stroke="#f4f4f4" stroke-width="1" fill="none"/>
<path d="M0 808.2L1920 1109.6" stroke="#f29797" stroke-width="1" fill="none"/>
<path d="M0 1551L1920 389.4" stroke="#98e298" stroke-width="1" fill="none"/>
<ellipse cx="974.5" cy="961.5" rx="12" ry="3.8" fill="#fff" stroke="#b4bcb4" stroke-width="1.6"/>
<path d="M963 959.7L986 963.3" stroke="#f08a8a" stroke-width="1"/><path d="M969 965L980 958.2" stroke="#8fe08f" stroke-width="1"/>
<defs><radialGradient id="sg" gradientUnits="userSpaceOnUse" cx="943" cy="518" r="508"><stop offset="0" stop-color="#76a7ee"/><stop offset="0.05" stop-color="#6fa1e8"/><stop offset="0.2" stop-color="#6c9ee6"/><stop offset="0.5" stop-color="#6a9be3"/><stop offset="0.68" stop-color="#6697e0"/><stop offset="0.8" stop-color="#5f90da"/><stop offset="0.9" stop-color="#588ad4"/><stop offset="1" stop-color="#5081cd"/></radialGradient><clipPath id="sc"><circle cx="956.9" cy="604.8" r="340.6"/></clipPath></defs>
<circle cx="956.9" cy="604.8" r="340.6" fill="url(#sg)"/>
<path clip-path="url(#sc)" d="M963.9 944.3L931.4 944.4M963.9 944.3L962.7 945.2M963.9 944.3L999.7 942.7M893.9 939.4L931.4 944.4M893.9 939.4L851.3 928.6M893.9 939.4L882.3 935.8M893.9 939.4L921.2 941.9M931.4 944.4L962.7 945.2M931.4 944.4L921.2 941.9M962.7 945.2L999.7 942.7M962.7 945.2L921.2 941.9M962.7 945.2L957.1 942.3M962.7 945.2L988.4 941.8M999.7 942.7L1033.2 936.4M999.7 942.7L988.4 941.8M999.7 942.7L1015.8 938.7M1033.2 936.4L1015.8 938.7M1033.2 936.4L1058.1 929.6M1033.2 936.4L1081.9 921.2M833.5 921.3L851.3 928.6M833.5 921.3L808.2 911.1M851.3 928.6L882.3 935.8M851.3 928.6L808.2 911.1M851.3 928.6L829.7 918.1M851.3 928.6L857.7 926.6M882.3 935.8L921.2 941.9M882.3 935.8L857.7 926.6M882.3 935.8L895.7 932.9M921.2 941.9L957.1 942.3M921.2 941.9L895.7 932.9M921.2 941.9L925.6 935.0M957.1 942.3L988.4 941.8M957.1 942.3L925.6 935.0M957.1 942.3L967.3 935.5M988.4 941.8L1015.8 938.7M988.4 941.8L967.3 935.5M988.4 941.8L1007.7 933.6M1015.8 938.7L1058.1 929.6M1015.8 938.7L1007.7 933.6M1015.8 938.7L1040.4 929.4M1058.1 929.6L1081.9 921.2M1058.1 929.6L1040.4 929.4M1058.1 929.6L1074.0 921.6M1058.1 929.6L1102.9 912.1M1081.9 921.2L1119.5 903.4M1081.9 921.2L1102.9 912.1M1119.5 903.4L1102.9 912.1M1119.5 903.4L1141.6 890.8M794.3 903.0L808.2 911.1M794.3 903.0L772.4 891.0M808.2 911.1L829.7 918.1M808.2 911.1L772.4 891.0M808.2 911.1L789.2 898.4M829.7 918.1L857.7 926.6M829.7 918.1L789.2 898.4M829.7 918.1L823.8 910.0M857.7 926.6L895.7 932.9M857.7 926.6L823.8 910.0M857.7 926.6L859.8 918.0M895.7 932.9L925.6 935.0M895.7 932.9L859.8 918.0M895.7 932.9L893.7 923.1M925.6 935.0L967.3 935.5M925.6 935.0L893.7 923.1M925.6 935.0L927.5 924.6M967.3 935.5L1007.7 933.6M967.3 935.5L927.5 924.6M967.3 935.5L963.0 922.7M967.3 935.5L1000.0 922.9M1007.7 933.6L1040.4 929.4M1007.7 933.6L1000.0 922.9M1007.7 933.6L1037.0 919.7M1040.4 929.4L1074.0 921.6M1040.4 929.4L1037.0 919.7M1040.4 929.4L1071.4 914.8M1074.0 921.6L1102.9 912.1M1074.0 921.6L1071.4 914.8M1074.0 921.6L1097.7 908.4M1102.9 912.1L1097.7 908.4M1102.9 912.1L1133.1 893.6M1102.9 912.1L1141.6 890.8M763.8 884.7L772.4 891.0M763.8 884.7L735.9 864.0M772.4 891.0L789.2 898.4M772.4 891.0L735.9 864.0M772.4 891.0L747.2 871.4M789.2 898.4L823.8 910.0M789.2 898.4L747.2 871.4M789.2 898.4L765.9 879.2M789.2 898.4L790.1 887.6M823.8 910.0L859.8 918.0M823.8 910.0L790.1 887.6M823.8 910.0L827.0 899.0M859.8 918.0L893.7 923.1M859.8 918.0L827.0 899.0M859.8 918.0L860.5 903.5M893.7 923.1L927.5 924.6M893.7 923.1L860.5 903.5M893.7 923.1L893.2 908.5M927.5 924.6L963.0 922.7M927.5 924.6L893.2 908.5M927.5 924.6L926.2 910.3M963.0 922.7L1000.0 922.9M963.0 922.7L926.2 910.3M963.0 922.7L964.4 908.6M963.0 922.7L994.3 909.4M1000.0 922.9L1037.0 919.7M1000.0 922.9L994.3 909.4M1000.0 922.9L1030.9 906.2M1037.0 919.7L1071.4 914.8M1037.0 919.7L1030.9 906.2M1037.0 919.7L1069.0 901.0M1071.4 914.8L1097.7 908.4M1071.4 914.8L1069.0 901.0M1071.4 914.8L1104.9 895.4M1097.7 908.4L1133.1 893.6M1097.7 908.4L1104.9 895.4M1097.7 908.4L1127.3 889.6M1133.1 893.6L1141.6 890.8M1133.1 893.6L1127.3 889.6M1133.1 893.6L1150.8 877.5M1133.1 893.6L1172.4 867.7M1141.6 890.8L1159.6 877.6M1141.6 890.8L1172.4 867.7M1159.6 877.6L1172.4 867.7M1159.6 877.6L1187.1 854.8M735.9 864.0L747.2 871.4M735.9 864.0L702.8 831.3M735.9 864.0L712.1 840.9M747.2 871.4L765.9 879.2M747.2 871.4L712.1 840.9M747.2 871.4L728.0 850.3M765.9 879.2L790.1 887.6M765.9 879.2L728.0 850.3M765.9 879.2L752.8 860.8M790.1 887.6L827.0 899.0M790.1 887.6L752.8 860.8M790.1 887.6L773.7 865.2M790.1 887.6L803.3 875.9M827.0 899.0L860.5 903.5M827.0 899.0L803.3 875.9M827.0 899.0L837.6 881.9M860.5 903.5L893.2 908.5M860.5 903.5L837.6 881.9M860.5 903.5L872.9 887.8M893.2 908.5L926.2 910.3M893.2 908.5L872.9 887.8M893.2 908.5L908.9 892.1M926.2 910.3L964.4 908.6M926.2 910.3L908.9 892.1M926.2 910.3L941.5 891.4M964.4 908.6L994.3 909.4M964.4 908.6L941.5 891.4M964.4 908.6L980.9 890.8M994.3 909.4L1030.9 906.2M994.3 909.4L980.9 890.8M994.3 909.4L1016.8 889.7M1030.9 906.2L1069.0 901.0M1030.9 906.2L1016.8 889.7M1030.9 906.2L1054.1 883.9M1069.0 901.0L1104.9 895.4M1069.0 901.0L1054.1 883.9M1069.0 901.0L1088.8 878.1M1069.0 901.0L1117.9 875.7M1104.9 895.4L1127.3 889.6M1104.9 895.4L1117.9 875.7M1104.9 895.4L1144.8 869.8M1127.3 889.6L1150.8 877.5M1127.3 889.6L1144.8 869.8M1150.8 877.5L1172.4 867.7M1150.8 877.5L1144.8 869.8M1150.8 877.5L1179.9 852.7M1172.4 867.7L1187.1 854.8M1172.4 867.7L1202.8 839.9M1172.4 867.7L1179.9 852.7M1172.4 867.7L1192.2 847.0M1187.1 854.8L1202.8 839.9M1202.8 839.9L1218.3 821.8M1202.8 839.9L1192.2 847.0M1202.8 839.9L1212.1 821.9M1202.8 839.9L1230.1 807.2M1218.3 821.8L1230.1 807.2M1218.3 821.8L1244.5 786.4M702.8 831.3L712.1 840.9M702.8 831.3L674.3 793.3M702.8 831.3L680.9 804.1M712.1 840.9L728.0 850.3M712.1 840.9L680.9 804.1M712.1 840.9L691.9 814.4M728.0 850.3L752.8 860.8M728.0 850.3L691.9 814.4M728.0 850.3L703.8 820.3M728.0 850.3L725.5 833.7M752.8 860.8L773.7 865.2M752.8 860.8L749.0 840.5M752.8 860.8L725.5 833.7M773.7 865.2L803.3 875.9M773.7 865.2L749.0 840.5M773.7 865.2L778.5 849.1M803.3 875.9L837.6 881.9M803.3 875.9L778.5 849.1M803.3 875.9L816.2 856.7M837.6 881.9L872.9 887.8M837.6 881.9L816.2 856.7M837.6 881.9L843.0 864.8M872.9 887.8L908.9 892.1M872.9 887.8L843.0 864.8M872.9 887.8L877.2 864.3M908.9 892.1L941.5 891.4M908.9 892.1L877.2 864.3M908.9 892.1L914.4 867.5M941.5 891.4L980.9 890.8M941.5 891.4L914.4 867.5M941.5 891.4L953.7 868.4M980.9 890.8L1016.8 889.7M980.9 890.8L953.7 868.4M980.9 890.8L991.8 867.8M1016.8 889.7L1054.1 883.9M1016.8 889.7L991.8 867.8M1016.8 889.7L1030.5 866.4M1054.1 883.9L1088.8 878.1M1054.1 883.9L1030.5 866.4M1054.1 883.9L1058.3 860.2M1054.1 883.9L1093.5 856.5M1088.8 878.1L1117.9 875.7M1088.8 878.1L1093.5 856.5M1088.8 878.1L1128.5 851.1M1117.9 875.7L1144.8 869.8M1117.9 875.7L1128.5 851.1M1117.9 875.7L1152.1 846.7M1144.8 869.8L1179.9 852.7M1144.8 869.8L1152.1 846.7M1144.8 869.8L1179.4 836.2M1179.9 852.7L1192.2 847.0M1179.9 852.7L1179.4 836.2M1179.9 852.7L1200.3 824.5M1179.9 852.7L1212.1 821.9M1192.2 847.0L1212.1 821.9M749.0 840.5L778.5 849.1M749.0 840.5L725.5 833.7M749.0 840.5L720.7 809.6M749.0 840.5L737.3 815.5M749.0 840.5L755.8 820.9M778.5 849.1L816.2 856.7M778.5 849.1L755.8 820.9M778.5 849.1L797.7 831.3M816.2 856.7L843.0 864.8M816.2 856.7L797.7 831.3M816.2 856.7L840.3 840.9M843.0 864.8L877.2 864.3M843.0 864.8L840.3 840.9M877.2 864.3L914.4 867.5M877.2 864.3L840.3 840.9M877.2 864.3L874.0 838.1M877.2 864.3L899.7 844.5M914.4 867.5L953.7 868.4M914.4 867.5L899.7 844.5M914.4 867.5L937.3 839.8M953.7 868.4L991.8 867.8M953.7 868.4L937.3 839.8M953.7 868.4L978.7 844.1M991.8 867.8L1030.5 866.4M991.8 867.8L978.7 844.1M991.8 867.8L1011.2 842.4M1030.5 866.4L1058.3 860.2M1030.5 866.4L1011.2 842.4M1030.5 866.4L1050.2 836.7M1058.3 860.2L1093.5 856.5M1058.3 860.2L1050.2 836.7M1058.3 860.2L1084.9 836.3M1093.5 856.5L1128.5 851.1M1093.5 856.5L1084.9 836.3M1093.5 856.5L1123.2 830.0M1128.5 851.1L1152.1 846.7M1128.5 851.1L1123.2 830.0M1128.5 851.1L1149.6 823.3M1152.1 846.7L1179.4 836.2M1152.1 846.7L1149.6 823.3M1152.1 846.7L1180.6 814.1M1179.4 836.2L1200.3 824.5M1179.4 836.2L1180.6 814.1M1179.4 836.2L1202.5 804.7M1200.3 824.5L1212.1 821.9M1200.3 824.5L1202.5 804.7M1200.3 824.5L1219.9 797.6M1212.1 821.9L1230.1 807.2M1212.1 821.9L1219.9 797.6M1212.1 821.9L1239.6 786.1M1230.1 807.2L1244.5 786.4M1230.1 807.2L1239.6 786.1M1230.1 807.2L1250.7 774.4M1244.5 786.4L1250.7 774.4M1244.5 786.4L1262.2 755.8M674.3 793.3L680.9 804.1M674.3 793.3L656.5 765.3M680.9 804.1L691.9 814.4M680.9 804.1L656.5 765.3M680.9 804.1L667.9 781.1M691.9 814.4L703.8 820.3M691.9 814.4L667.9 781.1M691.9 814.4L675.9 782.1M703.8 820.3L725.5 833.7M703.8 820.3L675.9 782.1M703.8 820.3L698.9 801.1M725.5 833.7L698.9 801.1M725.5 833.7L720.7 809.6M656.5 765.3L667.9 781.1M656.5 765.3L639.0 725.7M656.5 765.3L641.7 733.1M656.5 765.3L653.5 751.9M667.9 781.1L675.9 782.1M667.9 781.1L653.5 751.9M675.9 782.1L698.9 801.1M675.9 782.1L653.5 751.9M675.9 782.1L663.3 752.4M675.9 782.1L678.9 764.9M698.9 801.1L720.7 809.6M698.9 801.1L678.9 764.9M698.9 801.1L700.6 777.0M720.7 809.6L737.3 815.5M720.7 809.6L700.6 777.0M720.7 809.6L727.7 785.3M737.3 815.5L755.8 820.9M737.3 815.5L727.7 785.3M755.8 820.9L797.7 831.3M755.8 820.9L727.7 785.3M755.8 820.9L762.1 798.1M797.7 831.3L840.3 840.9M797.7 831.3L762.1 798.1M797.7 831.3L787.2 796.7M797.7 831.3L823.9 811.2M840.3 840.9L874.0 838.1M840.3 840.9L823.9 811.2M840.3 840.9L863.7 813.0M874.0 838.1L899.7 844.5M874.0 838.1L863.7 813.0M874.0 838.1L898.0 815.5M899.7 844.5L937.3 839.8M899.7 844.5L898.0 815.5M937.3 839.8L978.7 844.1M937.3 839.8L898.0 815.5M937.3 839.8L936.8 810.3M937.3 839.8L967.6 812.9M978.7 844.1L1011.2 842.4M978.7 844.1L967.6 812.9M978.7 844.1L1008.6 813.3M1011.2 842.4L1050.2 836.7M1011.2 842.4L1008.6 813.3M1011.2 842.4L1044.7 814.1M1050.2 836.7L1084.9 836.3M1050.2 836.7L1044.7 814.1M1050.2 836.7L1079.9 811.8M1084.9 836.3L1123.2 830.0M1084.9 836.3L1079.9 811.8M1084.9 836.3L1113.7 803.6M1123.2 830.0L1149.6 823.3M1123.2 830.0L1113.7 803.6M1123.2 830.0L1144.6 797.5M1149.6 823.3L1180.6 814.1M1149.6 823.3L1144.6 797.5M1149.6 823.3L1175.2 788.7M1180.6 814.1L1202.5 804.7M1180.6 814.1L1175.2 788.7M1180.6 814.1L1201.3 781.0M1202.5 804.7L1219.9 797.6M1202.5 804.7L1201.3 781.0M1202.5 804.7L1225.8 770.4M1219.9 797.6L1239.6 786.1M1219.9 797.6L1225.8 770.4M1219.9 797.6L1243.7 762.5M1239.6 786.1L1250.7 774.4M1239.6 786.1L1243.7 762.5M1239.6 786.1L1257.4 750.7M1250.7 774.4L1262.2 755.8M1250.7 774.4L1257.4 750.7M1250.7 774.4L1268.6 739.0M1262.2 755.8L1268.6 739.0M1262.2 755.8L1274.9 726.8M639.0 725.7L641.7 733.1M639.0 725.7L629.4 697.8M641.7 733.1L653.5 751.9M641.7 733.1L629.4 697.8M641.7 733.1L635.6 707.5M653.5 751.9L663.3 752.4M653.5 751.9L635.6 707.5M653.5 751.9L647.0 717.6M663.3 752.4L678.9 764.9M663.3 752.4L647.0 717.6M663.3 752.4L659.8 726.1M678.9 764.9L700.6 777.0M678.9 764.9L659.8 726.1M678.9 764.9L678.3 738.9M700.6 777.0L727.7 785.3M700.6 777.0L678.3 738.9M700.6 777.0L696.8 747.9M727.7 785.3L762.1 798.1M727.7 785.3L696.8 747.9M727.7 785.3L719.4 751.4M727.7 785.3L750.8 765.1M762.1 798.1L787.2 796.7M762.1 798.1L750.8 765.1M787.2 796.7L823.9 811.2M787.2 796.7L782.3 764.6M787.2 796.7L805.9 773.8M787.2 796.7L750.8 765.1M823.9 811.2L863.7 813.0M823.9 811.2L805.9 773.8M823.9 811.2L852.4 780.3M863.7 813.0L898.0 815.5M863.7 813.0L852.4 780.3M863.7 813.0L884.6 783.1M898.0 815.5L936.8 810.3M898.0 815.5L884.6 783.1M898.0 815.5L925.6 786.2M936.8 810.3L967.6 812.9M936.8 810.3L925.6 786.2M936.8 810.3L960.2 784.3M967.6 812.9L1008.6 813.3M967.6 812.9L960.2 784.3M967.6 812.9L999.5 784.9M1008.6 813.3L1044.7 814.1M1008.6 813.3L999.5 784.9M1008.6 813.3L1037.8 784.1M1044.7 814.1L1079.9 811.8M1044.7 814.1L1037.8 784.1M1044.7 814.1L1072.3 780.2M1079.9 811.8L1113.7 803.6M1079.9 811.8L1072.3 780.2M1079.9 811.8L1105.2 776.1M1113.7 803.6L1144.6 797.5M1113.7 803.6L1105.2 776.1M1113.7 803.6L1143.4 767.4M1144.6 797.5L1175.2 788.7M1144.6 797.5L1143.4 767.4M1144.6 797.5L1171.1 761.6M1175.2 788.7L1201.3 781.0M1175.2 788.7L1171.1 761.6M1175.2 788.7L1197.4 754.3M1201.3 781.0L1225.8 770.4M1201.3 781.0L1197.4 754.3M1201.3 781.0L1223.5 742.0M1225.8 770.4L1243.7 762.5M1225.8 770.4L1223.5 742.0M1225.8 770.4L1244.6 730.3M1243.7 762.5L1257.4 750.7M1243.7 762.5L1244.6 730.3M1243.7 762.5L1264.4 719.4M1257.4 750.7L1268.6 739.0M1257.4 750.7L1264.4 719.4M1257.4 750.7L1275.3 710.4M1268.6 739.0L1274.9 726.8M1268.6 739.0L1275.3 710.4M1268.6 739.0L1281.6 704.6M1274.9 726.8L1281.6 704.6M1274.9 726.8L1286.5 690.3M782.3 764.6L805.9 773.8M782.3 764.6L750.8 765.1M782.3 764.6L760.8 730.7M782.3 764.6L789.5 741.0M805.9 773.8L852.4 780.3M805.9 773.8L789.5 741.0M805.9 773.8L823.4 742.1M852.4 780.3L884.6 783.1M852.4 780.3L823.4 742.1M852.4 780.3L866.2 748.7M884.6 783.1L925.6 786.2M884.6 783.1L866.2 748.7M884.6 783.1L900.3 754.1M925.6 786.2L960.2 784.3M925.6 786.2L900.3 754.1M925.6 786.2L941.0 753.3M960.2 784.3L999.5 784.9M960.2 784.3L941.0 753.3M960.2 784.3L976.6 751.9M999.5 784.9L1037.8 784.1M999.5 784.9L976.6 751.9M999.5 784.9L1015.4 753.3M1037.8 784.1L1072.3 780.2M1037.8 784.1L1015.4 753.3M1037.8 784.1L1049.1 747.7M1072.3 780.2L1105.2 776.1M1072.3 780.2L1049.1 747.7M1072.3 780.2L1086.7 745.6M1105.2 776.1L1143.4 767.4M1105.2 776.1L1086.7 745.6M1105.2 776.1L1127.2 742.0M1143.4 767.4L1171.1 761.6M1143.4 767.4L1127.2 742.0M1143.4 767.4L1156.4 733.8M1171.1 761.6L1197.4 754.3M1171.1 761.6L1156.4 733.8M1171.1 761.6L1183.9 727.6M1197.4 754.3L1223.5 742.0M1197.4 754.3L1183.9 727.6M1197.4 754.3L1209.2 717.7M1223.5 742.0L1244.6 730.3M1223.5 742.0L1209.2 717.7M1223.5 742.0L1233.7 709.4M1244.6 730.3L1264.4 719.4M1244.6 730.3L1233.7 709.4M1244.6 730.3L1250.4 694.7M1244.6 730.3L1265.1 691.2M1264.4 719.4L1275.3 710.4M1264.4 719.4L1265.1 691.2M1264.4 719.4L1279.6 679.2M1275.3 710.4L1281.6 704.6M1275.3 710.4L1279.6 679.2M1275.3 710.4L1290.2 665.3M1281.6 704.6L1286.5 690.3M1281.6 704.6L1290.2 665.3M1286.5 690.3L1290.2 665.3M1286.5 690.3L1294.1 645.9M627.6 687.9L629.4 697.8M627.6 687.9L620.7 659.3M629.4 697.8L635.6 707.5M629.4 697.8L620.7 659.3M629.4 697.8L625.2 667.6M635.6 707.5L647.0 717.6M635.6 707.5L625.2 667.6M635.6 707.5L633.1 675.6M647.0 717.6L659.8 726.1M647.0 717.6L633.1 675.6M647.0 717.6L646.4 690.0M659.8 726.1L678.3 738.9M659.8 726.1L646.4 690.0M659.8 726.1L661.6 698.5M678.3 738.9L696.8 747.9M678.3 738.9L661.6 698.5M678.3 738.9L680.4 708.6M696.8 747.9L719.4 751.4M696.8 747.9L680.4 708.6M696.8 747.9L701.8 722.6M719.4 751.4L750.8 765.1M719.4 751.4L701.8 722.6M719.4 751.4L725.9 720.9M750.8 765.1L725.9 720.9M750.8 765.1L760.8 730.7M620.1 643.8L620.7 659.3M620.1 643.8L616.3 604.1M620.7 659.3L625.2 667.6M620.7 659.3L616.3 604.1M620.7 659.3L619.6 632.7M625.2 667.6L633.1 675.6M625.2 667.6L619.6 632.7M625.2 667.6L627.0 635.7M633.1 675.6L646.4 690.0M633.1 675.6L627.0 635.7M633.1 675.6L638.2 653.9M646.4 690.0L661.6 698.5M646.4 690.0L638.2 653.9M646.4 690.0L652.1 662.4M661.6 698.5L680.4 708.6M661.6 698.5L652.1 662.4M661.6 698.5L672.0 672.7M680.4 708.6L701.8 722.6M680.4 708.6L672.0 672.7M680.4 708.6L695.4 684.7M701.8 722.6L725.9 720.9M701.8 722.6L695.4 684.7M725.9 720.9L760.8 730.7M725.9 720.9L695.4 684.7M725.9 720.9L718.9 683.7M725.9 720.9L746.6 693.8M760.8 730.7L789.5 741.0M760.8 730.7L746.6 693.8M760.8 730.7L787.6 701.9M789.5 741.0L823.4 742.1M789.5 741.0L787.6 701.9M823.4 742.1L866.2 748.7M823.4 742.1L787.6 701.9M823.4 742.1L822.2 705.0M823.4 742.1L850.6 719.4M866.2 748.7L900.3 754.1M866.2 748.7L850.6 719.4M866.2 748.7L879.9 718.3M900.3 754.1L941.0 753.3M900.3 754.1L879.9 718.3M900.3 754.1L924.2 716.3M941.0 753.3L976.6 751.9M941.0 753.3L924.2 716.3M941.0 753.3L957.1 724.6M976.6 751.9L1015.4 753.3M976.6 751.9L957.1 724.6M976.6 751.9L995.5 719.4M1015.4 753.3L1049.1 747.7M1015.4 753.3L995.5 719.4M1015.4 753.3L1029.3 714.6M1049.1 747.7L1086.7 745.6M1049.1 747.7L1029.3 714.6M1049.1 747.7L1072.4 710.5M1086.7 745.6L1127.2 742.0M1086.7 745.6L1072.4 710.5M1086.7 745.6L1103.3 704.7M1127.2 742.0L1156.4 733.8M1127.2 742.0L1103.3 704.7M1127.2 742.0L1145.2 701.8M1156.4 733.8L1183.9 727.6M1156.4 733.8L1145.2 701.8M1156.4 733.8L1171.6 699.7M1183.9 727.6L1209.2 717.7M1183.9 727.6L1171.6 699.7M1183.9 727.6L1193.0 688.1M1209.2 717.7L1233.7 709.4M1209.2 717.7L1193.0 688.1M1209.2 717.7L1223.0 679.5M1233.7 709.4L1250.4 694.7M1233.7 709.4L1223.0 679.5M1233.7 709.4L1246.3 671.8M1250.4 694.7L1265.1 691.2M1250.4 694.7L1246.3 671.8M1250.4 694.7L1264.0 653.1M1265.1 691.2L1279.6 679.2M1265.1 691.2L1264.0 653.1M1265.1 691.2L1275.7 655.2M1279.6 679.2L1290.2 665.3M1279.6 679.2L1275.7 655.2M1279.6 679.2L1286.9 641.6M1290.2 665.3L1294.1 645.9M1290.2 665.3L1286.9 641.6M1290.2 665.3L1293.2 629.9M1290.2 665.3L1297.2 602.8M1294.1 645.9L1297.2 602.8M616.3 604.1L619.6 632.7M616.3 604.1L618.2 583.1M616.3 604.1L619.1 565.4M616.3 604.1L619.6 601.8M616.3 604.1L622.0 547.8M619.6 632.7L627.0 635.7M619.6 632.7L619.6 601.8M627.0 635.7L638.2 653.9M627.0 635.7L619.6 601.8M627.0 635.7L626.2 594.7M627.0 635.7L640.4 614.7M638.2 653.9L652.1 662.4M638.2 653.9L640.4 614.7M652.1 662.4L672.0 672.7M652.1 662.4L640.4 614.7M652.1 662.4L660.1 635.8M672.0 672.7L695.4 684.7M672.0 672.7L660.1 635.8M672.0 672.7L679.9 635.6M695.4 684.7L718.9 683.7M695.4 684.7L679.9 635.6M695.4 684.7L702.7 652.5M718.9 683.7L746.6 693.8M718.9 683.7L702.7 652.5M718.9 683.7L725.0 654.0M746.6 693.8L787.6 701.9M746.6 693.8L725.0 654.0M746.6 693.8L758.6 659.1M787.6 701.9L822.2 705.0M787.6 701.9L758.6 659.1M787.6 701.9L784.8 660.4M787.6 701.9L814.3 668.4M822.2 705.0L850.6 719.4M822.2 705.0L814.3 668.4M822.2 705.0L853.3 687.8M850.6 719.4L879.9 718.3M850.6 719.4L853.3 687.8M879.9 718.3L924.2 716.3M879.9 718.3L853.3 687.8M879.9 718.3L889.4 683.1M924.2 716.3L957.1 724.6M924.2 716.3L889.4 683.1M924.2 716.3L927.2 676.2M924.2 716.3L962.5 687.6M957.1 724.6L995.5 719.4M957.1 724.6L962.5 687.6M995.5 719.4L1029.3 714.6M995.5 719.4L962.5 687.6M995.5 719.4L1002.5 682.3M1029.3 714.6L1072.4 710.5M1029.3 714.6L1039.5 678.8M1029.3 714.6L1002.5 682.3M1072.4 710.5L1103.3 704.7M1072.4 710.5L1039.5 678.8M1072.4 710.5L1080.1 682.3M1103.3 704.7L1145.2 701.8M1103.3 704.7L1080.1 682.3M1103.3 704.7L1102.9 670.7M1103.3 704.7L1135.1 667.2M1145.2 701.8L1171.6 699.7M1145.2 701.8L1135.1 667.2M1145.2 701.8L1171.2 664.0M1171.6 699.7L1193.0 688.1M1171.6 699.7L1171.2 664.0M1193.0 688.1L1223.0 679.5M1193.0 688.1L1171.2 664.0M1193.0 688.1L1206.6 644.6M1223.0 679.5L1246.3 671.8M1223.0 679.5L1206.6 644.6M1223.0 679.5L1243.4 635.5M1246.3 671.8L1264.0 653.1M1246.3 671.8L1243.4 635.5M1264.0 653.1L1275.7 655.2M1264.0 653.1L1243.4 635.5M1264.0 653.1L1263.5 612.9M1264.0 653.1L1279.0 614.5M1275.7 655.2L1286.9 641.6M1275.7 655.2L1279.0 614.5M1286.9 641.6L1293.2 629.9M1286.9 641.6L1279.0 614.5M1286.9 641.6L1291.2 603.4M1293.2 629.9L1297.2 602.8M1293.2 629.9L1291.2 603.4M1297.2 602.8L1291.2 603.4M1297.2 602.8L1293.8 559.9M1297.2 602.8L1290.8 561.1M1297.2 602.8L1291.2 541.0M1039.5 678.8L1080.1 682.3M1039.5 678.8L1002.5 682.3M1039.5 678.8L1012.0 649.3M1039.5 678.8L1038.3 628.2M1039.5 678.8L1077.1 649.0M1080.1 682.3L1102.9 670.7M1080.1 682.3L1077.1 649.0M1102.9 670.7L1135.1 667.2M1102.9 670.7L1077.1 649.0M1102.9 670.7L1117.6 628.3M1135.1 667.2L1171.2 664.0M1135.1 667.2L1117.6 628.3M1135.1 667.2L1152.0 626.1M1171.2 664.0L1206.6 644.6M1171.2 664.0L1152.0 626.1M1171.2 664.0L1180.1 623.8M1206.6 644.6L1243.4 635.5M1206.6 644.6L1180.1 623.8M1206.6 644.6L1197.3 606.7M1206.6 644.6L1222.2 600.3M1243.4 635.5L1263.5 612.9M1243.4 635.5L1222.2 600.3M1243.4 635.5L1247.7 581.7M1263.5 612.9L1279.0 614.5M1263.5 612.9L1247.7 581.7M1263.5 612.9L1269.0 575.6M1279.0 614.5L1291.2 603.4M1279.0 614.5L1269.0 575.6M1279.0 614.5L1283.0 568.4M1291.2 603.4L1283.0 568.4M1291.2 603.4L1290.8 561.1M1293.8 559.9L1291.2 541.0M618.2 583.1L619.1 565.4M618.2 583.1L619.6 601.8M618.2 583.1L621.9 569.9M619.1 565.4L622.0 547.8M619.1 565.4L627.2 527.1M619.1 565.4L621.9 569.9M619.6 601.8L626.2 594.7M619.6 601.8L621.9 569.9M626.2 594.7L640.4 614.7M626.2 594.7L621.9 569.9M626.2 594.7L634.6 553.9M640.4 614.7L660.1 635.8M640.4 614.7L634.6 553.9M640.4 614.7L650.3 574.9M640.4 614.7L662.0 602.8M660.1 635.8L679.9 635.6M660.1 635.8L662.0 602.8M679.9 635.6L702.7 652.5M679.9 635.6L662.0 602.8M679.9 635.6L683.4 598.2M679.9 635.6L704.1 621.4M702.7 652.5L725.0 654.0M702.7 652.5L704.1 621.4M725.0 654.0L758.6 659.1M725.0 654.0L704.1 621.4M725.0 654.0L733.0 618.9M758.6 659.1L784.8 660.4M758.6 659.1L733.0 618.9M758.6 659.1L767.2 626.4M784.8 660.4L814.3 668.4M784.8 660.4L796.7 634.0M784.8 660.4L767.2 626.4M814.3 668.4L853.3 687.8M814.3 668.4L796.7 634.0M814.3 668.4L823.5 633.8M814.3 668.4L857.4 646.4M853.3 687.8L889.4 683.1M853.3 687.8L857.4 646.4M889.4 683.1L927.2 676.2M889.4 683.1L857.4 646.4M889.4 683.1L912.8 632.3M927.2 676.2L962.5 687.6M927.2 676.2L912.8 632.3M927.2 676.2L945.5 650.7M962.5 687.6L1002.5 682.3M962.5 687.6L945.5 650.7M962.5 687.6L980.8 647.5M1002.5 682.3L980.8 647.5M1002.5 682.3L1012.0 649.3M796.7 634.0L823.5 633.8M796.7 634.0L767.2 626.4M796.7 634.0L782.5 594.8M796.7 634.0L812.6 602.5M823.5 633.8L857.4 646.4M823.5 633.8L812.6 602.5M823.5 633.8L843.5 605.5M857.4 646.4L912.8 632.3M857.4 646.4L843.5 605.5M857.4 646.4L884.0 600.8M912.8 632.3L945.5 650.7M912.8 632.3L884.0 600.8M912.8 632.3L963.9 609.1M912.8 632.3L912.9 593.1M912.8 632.3L934.8 588.8M945.5 650.7L980.8 647.5M945.5 650.7L963.9 609.1M980.8 647.5L1012.0 649.3M980.8 647.5L963.9 609.1M980.8 647.5L1004.7 616.6M1012.0 649.3L1038.3 628.2M1012.0 649.3L1004.7 616.6M1038.3 628.2L1077.1 649.0M1038.3 628.2L1004.7 616.6M1038.3 628.2L1022.1 601.2M1038.3 628.2L1079.2 600.0M1038.3 628.2L1041.3 582.9M1077.1 649.0L1117.6 628.3M1077.1 649.0L1079.2 600.0M1117.6 628.3L1152.0 626.1M1117.6 628.3L1079.2 600.0M1117.6 628.3L1109.4 587.5M1117.6 628.3L1134.5 587.4M1152.0 626.1L1180.1 623.8M1152.0 626.1L1134.5 587.4M1152.0 626.1L1169.5 580.9M1180.1 623.8L1197.3 606.7M1180.1 623.8L1169.5 580.9M1197.3 606.7L1222.2 600.3M1197.3 606.7L1169.5 580.9M1197.3 606.7L1199.8 576.9M1222.2 600.3L1247.7 581.7M1222.2 600.3L1199.8 576.9M1222.2 600.3L1217.3 544.8M1247.7 581.7L1269.0 575.6M1247.7 581.7L1217.3 544.8M1247.7 581.7L1240.8 547.5M1247.7 581.7L1255.3 543.1M1269.0 575.6L1283.0 568.4M1269.0 575.6L1255.3 543.1M1269.0 575.6L1270.7 536.5M1283.0 568.4L1290.8 561.1M1283.0 568.4L1270.7 536.5M1283.0 568.4L1280.8 535.7M1290.8 561.1L1291.2 541.0M1290.8 561.1L1280.8 535.7M1290.8 561.1L1280.8 512.8M1291.2 541.0L1280.8 512.8M1291.2 541.0L1280.8 500.2M1291.2 541.0L1282.4 508.7M622.0 547.8L627.2 527.1M622.0 547.8L642.8 473.5M627.2 527.1L621.9 569.9M627.2 527.1L634.6 553.9M627.2 527.1L642.8 480.0M627.2 527.1L642.8 473.5M627.2 527.1L643.2 499.5M621.9 569.9L634.6 553.9M634.6 553.9L650.3 574.9M634.6 553.9L656.1 536.9M634.6 553.9L643.2 499.5M634.6 553.9L650.0 513.0M650.3 574.9L662.0 602.8M650.3 574.9L656.1 536.9M650.3 574.9L674.0 562.8M662.0 602.8L683.4 598.2M662.0 602.8L674.0 562.8M683.4 598.2L704.1 621.4M683.4 598.2L674.0 562.8M683.4 598.2L708.2 576.8M704.1 621.4L733.0 618.9M704.1 621.4L708.2 576.8M733.0 618.9L767.2 626.4M733.0 618.9L708.2 576.8M733.0 618.9L747.8 582.4M767.2 626.4L747.8 582.4M767.2 626.4L782.5 594.8M642.8 480.0L642.8 473.5M642.8 480.0L654.6 451.0M642.8 480.0L643.2 499.5M642.8 480.0L667.0 442.9M656.1 536.9L674.0 562.8M656.1 536.9L650.0 513.0M656.1 536.9L667.7 499.0M656.1 536.9L680.2 518.6M674.0 562.8L708.2 576.8M674.0 562.8L680.2 518.6M674.0 562.8L699.3 536.2M708.2 576.8L747.8 582.4M708.2 576.8L699.3 536.2M708.2 576.8L733.7 533.3M747.8 582.4L782.5 594.8M747.8 582.4L733.7 533.3M747.8 582.4L770.7 552.0M782.5 594.8L812.6 602.5M782.5 594.8L770.7 552.0M782.5 594.8L803.3 564.8M812.6 602.5L843.5 605.5M812.6 602.5L803.3 564.8M812.6 602.5L830.1 574.9M843.5 605.5L884.0 600.8M843.5 605.5L830.1 574.9M843.5 605.5L865.2 563.6M884.0 600.8L865.2 563.6M884.0 600.8L912.9 593.1M884.0 600.8L917.8 558.8M963.9 609.1L1004.7 616.6M963.9 609.1L934.8 588.8M963.9 609.1L965.1 562.0M963.9 609.1L1004.5 576.9M1004.7 616.6L1022.1 601.2M1004.7 616.6L1004.5 576.9M1022.1 601.2L1004.5 576.9M1022.1 601.2L1041.3 582.9M1079.2 600.0L1109.4 587.5M1079.2 600.0L1094.0 564.5M1079.2 600.0L1041.3 582.9M1079.2 600.0L1069.2 559.3M1109.4 587.5L1134.5 587.4M1109.4 587.5L1094.0 564.5M1109.4 587.5L1114.3 560.0M1134.5 587.4L1169.5 580.9M1134.5 587.4L1136.1 546.2M1134.5 587.4L1114.3 560.0M1169.5 580.9L1199.8 576.9M1169.5 580.9L1136.1 546.2M1169.5 580.9L1185.5 548.1M1169.5 580.9L1161.3 535.2M1199.8 576.9L1217.3 544.8M1199.8 576.9L1185.5 548.1M1217.3 544.8L1240.8 547.5M1217.3 544.8L1185.5 548.1M1217.3 544.8L1236.0 516.1M1217.3 544.8L1178.3 507.3M1217.3 544.8L1203.9 483.6M1240.8 547.5L1255.3 543.1M1240.8 547.5L1236.0 516.1M1255.3 543.1L1270.7 536.5M1255.3 543.1L1236.0 516.1M1255.3 543.1L1254.1 500.0M1270.7 536.5L1280.8 535.7M1270.7 536.5L1254.1 500.0M1270.7 536.5L1270.9 509.4M1280.8 535.7L1280.8 512.8M1280.8 535.7L1270.9 509.4M1280.8 512.8L1280.8 500.2M1280.8 512.8L1270.9 509.4M1280.8 512.8L1258.3 467.2M1280.8 512.8L1270.2 475.3M1280.8 500.2L1282.4 508.7M1280.8 500.2L1270.2 475.3M1280.8 500.2L1267.9 466.1M1282.4 508.7L1267.9 466.1M1094.0 564.5L1114.3 560.0M1094.0 564.5L1069.2 559.3M1094.0 564.5L1095.4 522.6M1136.1 546.2L1114.3 560.0M1136.1 546.2L1095.4 522.6M1136.1 546.2L1161.3 535.2M1136.1 546.2L1141.1 504.6M1114.3 560.0L1095.4 522.6M1185.5 548.1L1161.3 535.2M1185.5 548.1L1178.3 507.3M1236.0 516.1L1254.1 500.0M1236.0 516.1L1203.9 483.6M1236.0 516.1L1230.1 479.3M1254.1 500.0L1270.9 509.4M1254.1 500.0L1258.3 467.2M1254.1 500.0L1230.1 479.3M1254.1 500.0L1236.3 455.1M1270.9 509.4L1258.3 467.2M1258.3 467.2L1270.2 475.3M1258.3 467.2L1236.3 455.1M1258.3 467.2L1249.0 431.7M1258.3 467.2L1237.3 437.6M1258.3 467.2L1236.6 424.1M1270.2 475.3L1267.9 466.1M1270.2 475.3L1249.0 431.7M1267.9 466.1L1249.0 431.7M1267.9 466.1L1248.2 429.6M642.8 473.5L654.6 451.0M642.8 473.5L665.9 428.0M654.6 451.0L665.9 428.0M654.6 451.0L669.9 425.5M654.6 451.0L667.0 442.9M643.2 499.5L663.7 476.0M643.2 499.5L650.0 513.0M643.2 499.5L667.0 442.9M663.7 476.0L650.0 513.0M663.7 476.0L667.7 499.0M663.7 476.0L682.8 468.1M663.7 476.0L667.0 442.9M663.7 476.0L692.4 436.2M650.0 513.0L667.7 499.0M667.7 499.0L680.2 518.6M667.7 499.0L682.8 468.1M667.7 499.0L688.9 485.2M680.2 518.6L699.3 536.2M680.2 518.6L688.9 485.2M680.2 518.6L711.9 494.6M699.3 536.2L733.7 533.3M699.3 536.2L711.9 494.6M733.7 533.3L770.7 552.0M733.7 533.3L711.9 494.6M733.7 533.3L744.5 490.8M733.7 533.3L769.6 508.3M770.7 552.0L803.3 564.8M770.7 552.0L769.6 508.3M770.7 552.0L796.2 527.9M803.3 564.8L830.1 574.9M803.3 564.8L796.2 527.9M803.3 564.8L835.1 528.5M830.1 574.9L865.2 563.6M830.1 574.9L835.1 528.5M865.2 563.6L835.1 528.5M865.2 563.6L897.3 506.3M865.2 563.6L917.8 558.8M912.9 593.1L934.8 588.8M912.9 593.1L917.8 558.8M934.8 588.8L965.1 562.0M934.8 588.8L917.8 558.8M965.1 562.0L1004.5 576.9M965.1 562.0L917.8 558.8M965.1 562.0L994.6 543.4M965.1 562.0L972.9 508.2M1004.5 576.9L1041.3 582.9M1004.5 576.9L994.6 543.4M1004.5 576.9L1033.3 535.4M1041.3 582.9L1033.3 535.4M1041.3 582.9L1069.2 559.3M682.8 468.1L688.9 485.2M682.8 468.1L692.4 436.2M682.8 468.1L712.4 449.7M688.9 485.2L711.9 494.6M688.9 485.2L712.4 449.7M711.9 494.6L744.5 490.8M711.9 494.6L712.4 449.7M711.9 494.6L742.9 456.7M744.5 490.8L769.6 508.3M744.5 490.8L742.9 456.7M744.5 490.8L773.4 465.6M769.6 508.3L796.2 527.9M769.6 508.3L773.4 465.6M769.6 508.3L810.6 482.5M796.2 527.9L835.1 528.5M796.2 527.9L810.6 482.5M835.1 528.5L897.3 506.3M835.1 528.5L810.6 482.5M835.1 528.5L860.1 474.1M897.3 506.3L917.8 558.8M897.3 506.3L860.1 474.1M897.3 506.3L972.9 508.2M897.3 506.3L904.7 453.6M897.3 506.3L939.8 467.8M917.8 558.8L972.9 508.2M994.6 543.4L1033.3 535.4M994.6 543.4L972.9 508.2M1033.3 535.4L1069.2 559.3M1033.3 535.4L1095.4 522.6M1033.3 535.4L972.9 508.2M1033.3 535.4L1047.8 470.7M1069.2 559.3L1095.4 522.6M1095.4 522.6L1047.8 470.7M1095.4 522.6L1141.1 504.6M1095.4 522.6L1118.1 460.0M1161.3 535.2L1178.3 507.3M1161.3 535.2L1141.1 504.6M1178.9 479.7L1178.3 507.3M1178.9 479.7L1203.9 483.6M1178.9 479.7L1158.6 473.6M1178.9 479.7L1177.6 463.4M1178.3 507.3L1203.9 483.6M1178.3 507.3L1141.1 504.6M1178.3 507.3L1158.6 473.6M1203.9 483.6L1230.1 479.3M1203.9 483.6L1177.6 463.4M1203.9 483.6L1187.2 447.9M1203.9 483.6L1210.5 445.9M1230.1 479.3L1236.3 455.1M1230.1 479.3L1210.5 445.9M1236.3 455.1L1237.3 437.6M1236.3 455.1L1210.5 445.9M1236.3 455.1L1212.2 408.4M1249.0 431.7L1248.2 429.6M1249.0 431.7L1236.6 424.1M1249.0 431.7L1220.6 389.6M1249.0 431.7L1213.0 384.7M1248.2 429.6L1220.6 389.6M672.6 420.0L665.9 428.0M672.6 420.0L690.6 392.4M665.9 428.0L669.9 425.5M665.9 428.0L690.6 392.4M665.9 428.0L679.0 409.5M669.9 425.5L667.0 442.9M669.9 425.5L679.0 409.5M669.9 425.5L694.6 392.9M667.0 442.9L692.4 436.2M667.0 442.9L694.6 392.9M667.0 442.9L718.5 387.0M1237.3 437.6L1236.6 424.1M1237.3 437.6L1212.2 408.4M1236.6 424.1L1212.2 408.4M1236.6 424.1L1213.0 384.7M1220.6 389.6L1213.0 384.7M1220.6 389.6L1187.8 354.4M690.6 392.4L679.0 409.5M690.6 392.4L720.7 361.4M690.6 392.4L718.4 362.2M690.6 392.4L694.6 392.9M679.0 409.5L694.6 392.9M692.4 436.2L712.4 449.7M692.4 436.2L718.5 387.0M692.4 436.2L733.4 404.8M712.4 449.7L742.9 456.7M712.4 449.7L753.5 419.4M712.4 449.7L733.4 404.8M742.9 456.7L773.4 465.6M742.9 456.7L753.5 419.4M742.9 456.7L772.9 433.4M773.4 465.6L810.6 482.5M773.4 465.6L772.9 433.4M773.4 465.6L809.1 431.1M810.6 482.5L860.1 474.1M810.6 482.5L841.8 446.4M810.6 482.5L809.1 431.1M860.1 474.1L841.8 446.4M860.1 474.1L904.7 453.6M860.1 474.1L876.5 431.3M972.9 508.2L1047.8 470.7M972.9 508.2L939.8 467.8M972.9 508.2L986.4 443.7M1047.8 470.7L1078.8 419.8M1047.8 470.7L1118.1 460.0M1047.8 470.7L986.4 443.7M1047.8 470.7L1033.9 422.6M1141.1 504.6L1158.6 473.6M1141.1 504.6L1118.1 460.0M1158.6 473.6L1177.6 463.4M1158.6 473.6L1118.1 460.0M1158.6 473.6L1159.8 441.7M1177.6 463.4L1187.2 447.9M1177.6 463.4L1159.8 441.7M1187.2 447.9L1210.5 445.9M1187.2 447.9L1159.8 441.7M1187.2 447.9L1178.1 412.1M1210.5 445.9L1178.1 412.1M1210.5 445.9L1212.2 408.4M720.7 361.4L718.4 362.2M720.7 361.4L750.2 334.1M718.4 362.2L694.6 392.9M718.4 362.2L750.2 334.1M718.4 362.2L744.1 345.4M694.6 392.9L718.5 387.0M694.6 392.9L744.1 345.4M718.5 387.0L733.4 404.8M718.5 387.0L744.1 345.4M718.5 387.0L773.4 341.1M718.5 387.0L760.5 370.1M753.5 419.4L772.9 433.4M753.5 419.4L733.4 404.8M753.5 419.4L788.5 407.2M753.5 419.4L778.0 384.7M772.9 433.4L788.5 407.2M772.9 433.4L809.1 431.1M849.1 415.1L841.8 446.4M849.1 415.1L809.1 431.1M849.1 415.1L876.5 431.3M849.1 415.1L829.9 381.5M849.1 415.1L883.7 389.4M841.8 446.4L809.1 431.1M841.8 446.4L876.5 431.3M904.7 453.6L939.8 467.8M904.7 453.6L876.5 431.3M904.7 453.6L941.5 436.1M904.7 453.6L916.9 414.4M939.8 467.8L941.5 436.1M939.8 467.8L986.4 443.7M1078.8 419.8L1118.1 460.0M1078.8 419.8L1033.9 422.6M1078.8 419.8L1129.8 405.4M1078.8 419.8L1047.4 393.0M1078.8 419.8L1081.0 374.1M1118.1 460.0L1159.8 441.7M1118.1 460.0L1129.8 405.4M1159.8 441.7L1178.1 412.1M1159.8 441.7L1129.8 405.4M1178.1 412.1L1212.2 408.4M1178.1 412.1L1129.8 405.4M1178.1 412.1L1150.6 381.6M1178.1 412.1L1169.8 371.6M1212.2 408.4L1213.0 384.7M1212.2 408.4L1169.8 371.6M1212.2 408.4L1182.3 361.9M1213.0 384.7L1187.8 354.4M1213.0 384.7L1182.3 361.9M1213.0 384.7L1176.4 347.3M1187.8 354.4L1168.1 341.0M1187.8 354.4L1176.4 347.3M1187.8 354.4L1141.5 318.9M1168.1 341.0L1141.5 318.9M733.4 404.8L760.5 370.1M733.4 404.8L778.0 384.7M788.5 407.2L809.1 431.1M788.5 407.2L778.0 384.7M788.5 407.2L829.9 381.5M809.1 431.1L829.9 381.5M876.5 431.3L883.7 389.4M876.5 431.3L916.9 414.4M941.5 436.1L986.4 443.7M941.5 436.1L916.9 414.4M941.5 436.1L960.6 407.5M986.4 443.7L1002.4 405.3M986.4 443.7L1033.9 422.6M986.4 443.7L960.6 407.5M1002.4 405.3L1033.9 422.6M1002.4 405.3L960.6 407.5M1002.4 405.3L1027.1 401.7M1002.4 405.3L1016.7 381.1M1002.4 405.3L978.6 375.7M1033.9 422.6L1027.1 401.7M1033.9 422.6L1047.4 393.0M1129.8 405.4L1150.6 381.6M1129.8 405.4L1081.0 374.1M1129.8 405.4L1118.5 365.6M1150.6 381.6L1169.8 371.6M1150.6 381.6L1118.5 365.6M1150.6 381.6L1140.5 359.4M1169.8 371.6L1182.3 361.9M1169.8 371.6L1140.5 359.4M1169.8 371.6L1141.9 346.3M1169.8 371.6L1155.5 345.5M1182.3 361.9L1176.4 347.3M1182.3 361.9L1155.5 345.5M1182.3 361.9L1148.4 330.3M1176.4 347.3L1141.5 318.9M1176.4 347.3L1148.4 330.3M783.9 311.9L750.2 334.1M783.9 311.9L820.5 292.7M783.9 311.9L789.5 310.0M750.2 334.1L744.1 345.4M750.2 334.1L789.5 310.0M744.1 345.4L789.9 317.8M744.1 345.4L773.4 341.1M744.1 345.4L789.5 310.0M789.9 317.8L773.4 341.1M789.9 317.8L789.5 310.0M789.9 317.8L817.3 301.0M789.9 317.8L836.6 304.2M773.4 341.1L760.5 370.1M773.4 341.1L811.4 345.1M773.4 341.1L836.6 304.2M760.5 370.1L811.4 345.1M760.5 370.1L778.0 384.7M811.4 345.1L778.0 384.7M811.4 345.1L829.9 381.5M811.4 345.1L857.1 343.7M811.4 345.1L865.3 318.6M811.4 345.1L836.6 304.2M778.0 384.7L829.9 381.5M829.9 381.5L883.7 389.4M829.9 381.5L857.1 343.7M829.9 381.5L873.3 360.8M883.7 389.4L916.9 414.4M883.7 389.4L873.3 360.8M883.7 389.4L906.9 359.0M883.7 389.4L933.5 378.3M916.9 414.4L960.6 407.5M916.9 414.4L933.5 378.3M960.6 407.5L933.5 378.3M960.6 407.5L978.6 375.7M1027.1 401.7L1016.7 381.1M1027.1 401.7L1047.4 393.0M1016.7 381.1L1047.4 393.0M1016.7 381.1L978.6 375.7M1016.7 381.1L1000.4 353.3M1016.7 381.1L1036.9 359.4M1047.4 393.0L1081.0 374.1M1047.4 393.0L1036.9 359.4M1081.0 374.1L1118.5 365.6M1081.0 374.1L1036.9 359.4M1081.0 374.1L1086.5 346.7M1081.0 374.1L1057.0 343.2M1118.5 365.6L1140.5 359.4M1118.5 365.6L1086.5 346.7M1118.5 365.6L1107.5 335.5M1140.5 359.4L1141.9 346.3M1140.5 359.4L1107.5 335.5M1141.9 346.3L1155.5 345.5M1141.9 346.3L1107.5 335.5M1141.9 346.3L1121.9 324.0M1155.5 345.5L1121.9 324.0M1155.5 345.5L1148.4 330.3M1141.5 318.9L1116.0 305.4M1141.5 318.9L1148.4 330.3M1141.5 318.9L1078.8 286.9M1141.5 318.9L1100.9 302.0M1116.0 305.4L1078.8 286.9M820.5 292.7L789.5 310.0M820.5 292.7L861.2 277.9M820.5 292.7L839.1 287.6M789.5 310.0L817.3 301.0M789.5 310.0L839.1 287.6M817.3 301.0L839.1 287.6M817.3 301.0L837.9 293.3M817.3 301.0L836.6 304.2M857.1 343.7L873.3 360.8M857.1 343.7L865.3 318.6M857.1 343.7L880.8 327.8M857.1 343.7L895.5 338.6M873.3 360.8L906.9 359.0M873.3 360.8L895.5 338.6M906.9 359.0L933.5 378.3M906.9 359.0L895.5 338.6M906.9 359.0L951.3 338.8M933.5 378.3L978.6 375.7M933.5 378.3L951.3 338.8M978.6 375.7L1000.4 353.3M978.6 375.7L951.3 338.8M1000.4 353.3L1036.9 359.4M1000.4 353.3L951.3 338.8M1000.4 353.3L1015.8 323.9M1036.9 359.4L1057.0 343.2M1036.9 359.4L1015.8 323.9M1086.5 346.7L1107.5 335.5M1086.5 346.7L1057.0 343.2M1086.5 346.7L1062.4 323.5M1107.5 335.5L1121.9 324.0M1107.5 335.5L1062.4 323.5M1107.5 335.5L1062.9 301.3M1121.9 324.0L1148.4 330.3M1121.9 324.0L1062.9 301.3M1121.9 324.0L1100.9 302.0M1148.4 330.3L1100.9 302.0M1078.8 286.9L1100.9 302.0M1078.8 286.9L1040.4 275.4M1078.8 286.9L1028.1 272.1M1078.8 286.9L1045.0 280.6M865.3 318.6L880.8 327.8M865.3 318.6L836.6 304.2M865.3 318.6L913.4 314.1M865.3 318.6L903.9 293.2M880.8 327.8L895.5 338.6M880.8 327.8L913.4 314.1M895.5 338.6L951.3 338.8M895.5 338.6L913.4 314.1M951.3 338.8L913.4 314.1M951.3 338.8L1015.8 323.9M951.3 338.8L964.9 305.3M1057.0 343.2L1062.4 323.5M1057.0 343.2L1015.8 323.9M1062.4 323.5L1062.9 301.3M1062.4 323.5L1015.8 323.9M1062.4 323.5L1038.1 308.5M1062.9 301.3L1100.9 302.0M1062.9 301.3L1038.1 308.5M1062.9 301.3L1045.0 280.6M1062.9 301.3L1008.8 296.7M1062.9 301.3L1006.7 280.4M1100.9 302.0L1045.0 280.6M1040.4 275.4L1028.1 272.1M1040.4 275.4L986.7 265.6M1028.1 272.1L986.7 265.6M1028.1 272.1L1045.0 280.6M1028.1 272.1L996.1 269.5M986.7 265.6L941.4 264.6M986.7 265.6L996.1 269.5M986.7 265.6L947.9 266.2M941.4 264.6L903.1 268.8M941.4 264.6L922.1 266.3M941.4 264.6L947.9 266.2M903.1 268.8L861.2 277.9M903.1 268.8L922.1 266.3M903.1 268.8L893.9 272.4M861.2 277.9L839.1 287.6M861.2 277.9L893.9 272.4M839.1 287.6L837.9 293.3M839.1 287.6L893.9 272.4M839.1 287.6L859.3 285.8M837.9 293.3L859.3 285.8M837.9 293.3L836.6 304.2M922.1 266.3L893.9 272.4M922.1 266.3L947.9 266.2M893.9 272.4L859.3 285.8M893.9 272.4L947.9 266.2M893.9 272.4L885.4 283.1M893.9 272.4L927.5 275.6M859.3 285.8L836.6 304.2M859.3 285.8L885.4 283.1M836.6 304.2L885.4 283.1M836.6 304.2L903.9 293.2M913.4 314.1L964.9 305.3M913.4 314.1L903.9 293.2M913.4 314.1L936.3 297.7M1015.8 323.9L1038.1 308.5M1015.8 323.9L964.9 305.3M1015.8 323.9L1008.8 296.7M1038.1 308.5L1008.8 296.7M1045.0 280.6L996.1 269.5M1045.0 280.6L1006.7 280.4M996.1 269.5L1006.7 280.4M996.1 269.5L947.9 266.2M996.1 269.5L967.7 272.9M964.9 305.3L1008.8 296.7M964.9 305.3L936.3 297.7M964.9 305.3L960.1 285.4M1008.8 296.7L1006.7 280.4M1008.8 296.7L960.1 285.4M1006.7 280.4L967.7 272.9M1006.7 280.4L960.1 285.4M947.9 266.2L927.5 275.6M947.9 266.2L967.7 272.9M885.4 283.1L903.9 293.2M885.4 283.1L927.5 275.6M903.9 293.2L936.3 297.7M903.9 293.2L927.5 275.6M903.9 293.2L960.1 285.4M936.3 297.7L960.1 285.4M927.5 275.6L967.7 272.9M927.5 275.6L960.1 285.4M967.7 272.9L960.1 285.4" stroke="#2f63b6" stroke-opacity="0.32" stroke-width="1.2" fill="none"/>
<circle cx="956.9" cy="604.8" r="339.6" fill="none" stroke="#3f78d2" stroke-width="1.6" stroke-opacity="0.45"/>
</svg>
<div class="abs" style="left:0;top:-183px;width:1920px;height:1080px">
<div class="abs" style="left:6px;top:188.8px;width:374px;height:30.8px;background:#f0f0f0;border:1px solid #c6c6c6;border-bottom:2px solid #bdbdbd"></div>
<div class="abs" style="left:36.9px;top:195.6px;font-size:14.4px;line-height:18px;color:#5f5f5f;letter-spacing:-0.558px;white-space:nowrap">BROWSER</div>
<div class="abs" style="left:6.5px;top:985.8px;width:373px;height:30.6px;background:#f0f0f0;border:1px solid #cbcbcb;border-bottom:2px solid #bdbdbd"></div>
<div class="abs" style="left:36.9px;top:991.9px;font-size:14.4px;line-height:18px;color:#5f5f5f;letter-spacing:-0.524px;white-space:nowrap">COMMENTS</div>
<div class="abs" style="left:51.5px;top:227px;width:190px;height:24.4px;background:#ececec"></div>
<div class="abs" style="left:53.4px;top:229.2px;width:3.6px;height:19.6px;background:#f4a8b0"></div>
<div class="abs" style="left:88.8px;top:229.2px;width:122px;height:19.6px;background:#919191"></div>
<div class="abs" style="left:88.8px;top:229.2px;width:29.6px;height:19.6px;background:#858585"></div>
<div class="abs" style="left:73.3px;top:257px;width:168.0px;height:24px;background:#eeeeee"></div>
<div class="abs" style="left:73.3px;top:287px;width:137.5px;height:24px;background:#eeeeee"></div>
<div class="abs" style="left:73.3px;top:317px;width:123.7px;height:24px;background:#eeeeee"></div>
<div class="abs" style="left:73.3px;top:347px;width:128.5px;height:24px;background:#eeeeee"></div>
<div class="abs" style="left:128.9px;top:230.2px;font-size:14.4px;line-height:18px;font-weight:bold;color:#ffffff;letter-spacing:-0.368px;white-space:nowrap">(Unsaved)</div>
<div class="abs" style="left:109.4px;top:260.4px;font-size:14.3px;line-height:18px;color:#333;letter-spacing:-0.312px;white-space:nowrap">Document Settings</div>
<div class="abs" style="left:114.4px;top:290.4px;font-size:14.3px;line-height:18px;color:#333;letter-spacing:-0.332px;white-space:nowrap">Named Views</div>
<div class="abs" style="left:145.7px;top:320.4px;font-size:14.3px;line-height:18px;color:#333;letter-spacing:-0.324px;white-space:nowrap">Origin</div>
<div class="abs" style="left:145.7px;top:350.4px;font-size:14.3px;line-height:18px;color:#333;letter-spacing:-0.420px;white-space:nowrap">Bodies</div>
<div class="abs" style="left:1855.4px;top:994.2px;font-size:14.2px;line-height:18px;font-weight:bold;color:#1e1e1e;letter-spacing:-0.439px;white-space:nowrap">Body2</div>
<svg class="abs" style="left:0;top:183px" width="420" height="840" viewBox="0 183 420 840">
<path d="M18.2 200.6V208.8L12.6 204.7ZM24.6 200.6V208.8L19 204.7Z" fill="#2b2b2b"/>
<circle cx="360.3" cy="204.6" r="5.6" fill="#222"/><path d="M357 204.6H363.6" stroke="#fff" stroke-width="1.6"/>
<circle cx="360.3" cy="1001.4" r="5.6" fill="#222"/><path d="M357 1001.4H363.6M360.3 998.1V1004.7" stroke="#fff" stroke-width="1.5"/>
<path d="M38 235.4V243.2H29Z" fill="#222"/>
<path d="M52.4 264.0L59.4 269.4L52.4 274.8Z" fill="#fff" stroke="#333" stroke-width="1.2" stroke-linejoin="round"/>
<path d="M52.4 294.0L59.4 299.4L52.4 304.8Z" fill="#fff" stroke="#333" stroke-width="1.2" stroke-linejoin="round"/>
<path d="M52.4 324.0L59.4 329.4L52.4 334.8Z" fill="#fff" stroke="#333" stroke-width="1.2" stroke-linejoin="round"/>
<path d="M52.4 354.0L59.4 359.4L52.4 364.8Z" fill="#fff" stroke="#333" stroke-width="1.2" stroke-linejoin="round"/>
<path d="M61.0 239.2Q70.8 229.6 80.6 239.2Q70.8 248.8 61.0 239.2Z" fill="#9a9a9a"/><circle cx="70.8" cy="239.2" r="3.7" fill="#ececec"/><circle cx="70.8" cy="239.2" r="1.9" fill="#9a9a9a"/>
<path d="M77.4 359.2Q87.2 349.6 97.0 359.2Q87.2 368.8 77.4 359.2Z" fill="#9a9a9a"/><circle cx="87.2" cy="359.2" r="3.7" fill="#ececec"/><circle cx="87.2" cy="359.2" r="1.9" fill="#9a9a9a"/>
<path d="M77.8 329.2Q87.2 320.6 96.6 329.2Q87.2 337.8 77.8 329.2Z" fill="none" stroke="#a6a6a6" stroke-width="1.2"/>
<circle cx="87.2" cy="329.2" r="3.4" fill="none" stroke="#a6a6a6" stroke-width="1.1"/>
<path d="M81.2 323.6L92.2 335.8M83.8 322.6L94.6 334.6" stroke="#a6a6a6" stroke-width="1.1"/>
<path d="M77.2 294.6H97.6V307.2H77.2Z" fill="#8e8e8e"/><path d="M77.2 291.4H85.8L87.2 293.8H77.2Z" fill="#a4a4a4"/>
<path d="M108.4 324.6H128.8V337.2H108.4Z" fill="#8e8e8e"/><path d="M108.4 321.4H117.0L118.4 323.8H108.4Z" fill="#a4a4a4"/>
<path d="M108.4 354.6H128.8V367.2H108.4Z" fill="#8e8e8e"/><path d="M108.4 351.4H117.0L118.4 353.8H108.4Z" fill="#a4a4a4"/>
<path d="M91.03 267.80L93.30 267.92L93.30 270.48L91.03 270.60L90.32 272.33L91.83 274.02L90.02 275.83L88.33 274.32L86.60 275.03L86.48 277.30L83.92 277.30L83.80 275.03L82.07 274.32L80.38 275.83L78.57 274.02L80.08 272.33L79.37 270.60L77.10 270.48L77.10 267.92L79.37 267.80L80.08 266.07L78.57 264.38L80.38 262.57L82.07 264.08L83.80 263.37L83.92 261.10L86.48 261.10L86.60 263.37L88.33 264.08L90.02 262.57L91.83 264.38L90.32 266.07ZM87.90 269.20A2.70 2.70 0 1 0 82.50 269.20A2.70 2.70 0 1 0 87.90 269.20Z" fill="#858585" fill-rule="evenodd"/><circle cx="85.20" cy="269.20" r="4.35" fill="none" stroke="#858585" stroke-width="3.30"/>
<path d="M95.2 232.6H105.6L109.4 231V243.2Q109.4 245.6 107 246H95.2Q94.4 245.6 94.4 244.6V233.4Q94.4 232.6 95.2 232.6Z" fill="#f2f2f6" stroke="#55555f" stroke-width="1"/>
<path d="M105.8 232.6V243.2Q105.6 245.4 103.4 245.8" fill="none" stroke="#9a9aa6" stroke-width=".9"/>
<circle cx="224.6" cy="238.9" r="7.6" fill="#f4f4f4" stroke="#7d7d7d" stroke-width="1.5"/><circle cx="224.6" cy="238.9" r="2.7" fill="#3a3a3a"/>
</svg><div class="abs" style="left:1603.8px;top:339px;width:313px;height:385px;background:#f0f0f0;border-left:1px solid #cfcfcf;border-bottom:2px solid #c9c9c9;border-right:1px solid #cfcfcf"></div>
<div class="abs" style="left:1915.6px;top:339px;width:1.2px;height:341px;background:#4e4e4e"></div>
<div class="abs" style="left:1605px;top:679.4px;width:311px;height:1px;background:#c4c4c4"></div>
<div class="abs" style="left:1603.8px;top:309px;width:312.3px;height:31.2px;background:#f0f0f0;border:1px solid #c9c9c9;border-bottom:2.4px solid #ababab"></div>
<div class="abs" style="left:1635.2px;top:315.2px;font-size:14.4px;line-height:18px;color:#626262;letter-spacing:-0.685px;white-space:nowrap;">REMESH</div>
<div class="abs" style="left:1619.7px;top:350.4px;font-size:14.3px;line-height:18px;color:#2a2a2a;letter-spacing:-0.332px;white-space:nowrap;">Body/Face Groups</div>
<div class="abs" style="left:1619.7px;top:387.5px;font-size:14.3px;line-height:18px;color:#2a2a2a;letter-spacing:-0.400px;white-space:nowrap;">Type</div>
<div class="abs" style="left:1619.7px;top:425.3px;font-size:14.3px;line-height:18px;color:#2a2a2a;letter-spacing:-0.312px;white-space:nowrap;">Density</div>
<div class="abs" style="left:1619.8px;top:500.4px;font-size:14.3px;line-height:18px;color:#2a2a2a;letter-spacing:-0.300px;white-space:nowrap;">Shape Preservation</div>
<div class="abs" style="left:1619.8px;top:575.2px;font-size:14.3px;line-height:18px;color:#2a2a2a;letter-spacing:-0.308px;white-space:nowrap;">Preserve Sharp Edges</div>
<div class="abs" style="left:1619.8px;top:612.3px;font-size:14.3px;line-height:18px;color:#2a2a2a;letter-spacing:-0.307px;white-space:nowrap;">Preserve Boundaries</div>
<div class="abs" style="left:1619.8px;top:650.2px;font-size:14.3px;line-height:18px;color:#2a2a2a;letter-spacing:-0.366px;white-space:nowrap;">Preview</div>
<div class="abs" style="left:1774.7px;top:342px;width:65.3px;height:33.8px;background:#1791d9"></div>
<div class="abs" style="left:1801.9px;top:350.6px;font-size:14.3px;line-height:18px;color:#ffffff;letter-spacing:-0.299px;white-space:nowrap;">1 s...</div>
<div class="abs" style="left:1775.3px;top:380.3px;width:100px;height:32.2px;background:#fff;border:1px solid #c6c6c6"></div>
<div class="abs" style="left:1803.6px;top:387.6px;font-size:14.3px;line-height:18px;color:#2a2a2a;letter-spacing:-0.331px;white-space:nowrap;">Adaptive</div>
<div class="abs" style="left:1775.3px;top:418.3px;width:99.4px;height:31.4px;background:#fff;border:1px solid #c4c4c4"></div>
<div class="abs" style="left:1778.9px;top:425.4px;font-size:14.3px;line-height:18px;color:#2a2a2a;letter-spacing:-0.507px;white-space:nowrap;">0.25</div>
<div class="abs" style="left:1775.3px;top:493.4px;width:99.6px;height:31.3px;background:#fff;border:1px solid #c4c4c4"></div>
<div class="abs" style="left:1779.0px;top:500.5px;font-size:14.3px;line-height:18px;color:#2a2a2a;letter-spacing:-0.532px;white-space:nowrap;">0.50</div>
<div class="abs" style="left:1739.3px;top:690.3px;width:74.6px;height:22.8px;background:linear-gradient(#4b8bd0,#3a78be 45%,#2c65a8);border:1px solid #2c5f9e"></div>
<div class="abs" style="left:1765.4px;top:692.9px;font-size:15.6px;line-height:18px;color:#ffffff;letter-spacing:-0.470px;white-space:nowrap;">OK</div>
<div class="abs" style="left:1827px;top:690.3px;width:74.4px;height:22.8px;background:linear-gradient(#e9e9e9,#dfdfdf);border:1px solid #c0c0c0"></div>
<div class="abs" style="left:1840.5px;top:692.9px;font-size:15.6px;line-height:18px;color:#595959;letter-spacing:-0.376px;white-space:nowrap;">Cancel</div>
<svg class="abs" style="left:1590px;top:195px" width="330" height="540" viewBox="1590 195 330 540">
<defs><linearGradient id="thg" x1="0" y1="0" x2="0" y2="1"><stop offset="0" stop-color="#efefef"/><stop offset=".5" stop-color="#c4c4c4"/><stop offset="1" stop-color="#8f8f8f"/></linearGradient><linearGradient id="cbg" x1="0" y1="0" x2="0" y2="1"><stop offset="0" stop-color="#f4f4f4"/><stop offset="1" stop-color="#d2d2d2"/></linearGradient><linearGradient id="vcf" x1="0" y1="0" x2="0" y2="1"><stop offset="0" stop-color="#f1f1f1"/><stop offset="1" stop-color="#e2e2e2"/></linearGradient><filter id="blur3" x="-30%" y="-30%" width="160%" height="160%"><feGaussianBlur stdDeviation="3"/></filter></defs>
<circle cx="1624.5" cy="324.5" r="5.7" fill="#222"/><path d="M1621.2 324.5H1627.8" stroke="#fff" stroke-width="1.7"/>
<path d="M1897.6 321.2V328.8L1903.4 325ZM1903.8 321.2V328.8L1909.8 325Z" fill="#222"/>
<path d="M1784.6 351.8V365L1787.9 362.2L1790 367.2L1792.2 366.2L1790.1 361.4L1794.2 361.2Z" fill="#fff" stroke="#6a6a6a" stroke-width=".9" stroke-linejoin="round"/>
<path d="M1854 354.4L1863.4 364M1863.4 354.4L1854 364" stroke="#3c3c3c" stroke-width="2.1"/>
<rect x="1779.2" y="386.3" width="19.5" height="19.5" rx="1.5" fill="#e3c662"/><rect x="1780" y="387" width="18" height="8" fill="#efd987" opacity=".7"/>
<path d="M1780 404L1786.4 387.2L1789 396.4L1795 387.4L1798 400M1786.4 387.2L1786.8 405M1789 396.4L1780.4 398.4M1789 396.4L1797.6 398.8M1789 396.4L1789.4 405M1789 396.4L1794.4 405.2M1795 387.4L1795.2 405" fill="none" stroke="#a88421" stroke-width=".8"/>
<path d="M1861.8 394.2H1868.4L1865.1 398.8Z" fill="#222"/>
<path d="M1786.4 470.8H1861.6" stroke="#4a4a4a" stroke-width="5.4" stroke-linecap="round"/><path d="M1786.4 470.8H1804.1" stroke="#6f92dc" stroke-width="5.4" stroke-linecap="round"/><path d="M1804.1 462.0L1811.4 468.4L1811.4 468.4V475.8Q1811.4 478.4 1808.7 478.4H1799.5Q1796.8 478.4 1796.8 475.8V468.4Z" fill="url(#thg)" stroke="#6e6e6e" stroke-width="1" stroke-linejoin="round"/>
<path d="M1786.4 546.0H1861.6" stroke="#4a4a4a" stroke-width="5.4" stroke-linecap="round"/><path d="M1786.4 546.0H1823.9" stroke="#6f92dc" stroke-width="5.4" stroke-linecap="round"/><path d="M1823.9 537.2L1831.2 543.6L1831.2 543.6V551.0Q1831.2 553.6 1828.5 553.6H1819.3Q1816.6 553.6 1816.6 551.0V543.6Z" fill="url(#thg)" stroke="#6e6e6e" stroke-width="1" stroke-linejoin="round"/>
<rect x="1781.4" y="575.7" width="15.2" height="15.2" rx="2.6" fill="url(#cbg)" stroke="#505050" stroke-width="1.3"/>
<rect x="1781.4" y="613.5" width="15.2" height="15.2" rx="2.6" fill="url(#cbg)" stroke="#505050" stroke-width="1.3"/>
<rect x="1781.4" y="650.6" width="15.2" height="15.2" rx="2.6" fill="url(#cbg)" stroke="#505050" stroke-width="1.3"/>
<path d="M1784.4 658L1787.8 662.4L1794 653.4" fill="none" stroke="#1c1c1c" stroke-width="1.7"/>
<circle cx="1622.5" cy="702.3" r="7.4" fill="#111"/><rect x="1621.2" y="700.6" width="2.7" height="5.4" fill="#fff"/><rect x="1620.2" y="700.6" width="3" height="1.3" fill="#fff"/><rect x="1620.2" y="705.3" width="4.8" height="1.3" fill="#fff"/><circle cx="1622.5" cy="698" r="1.5" fill="#fff"/>
<path d="M1826 277L1867 287L1892 268L1893 276L1868 296L1822 285Z" fill="#bdbdbd" opacity=".42" filter="url(#blur3)"/>
<path d="M1822.6 228.6L1866.4 233.2L1866.9 283.1L1826.2 274Z" fill="url(#vcf)"/>
<path d="M1866.4 233.2L1888.3 222L1888.6 264.3L1866.9 283.1Z" fill="#e6e6e6"/>
<path d="M1822.6 228.6L1847 218.4L1888.3 222L1866.4 233.2Z" fill="#f3f3f3"/>
<path d="M1822.6 228.6L1866.4 233.2L1888.3 222M1866.4 233.2L1866.9 283.1M1888.3 222L1888.6 264.3L1866.9 283.1M1822.6 228.6L1847 218.4L1888.3 222" fill="none" stroke="#7c7c7c" stroke-width=".9" stroke-dasharray="5 2.2" opacity=".62"/>
<path d="M1820.6 221.5L1826.2 273.6" stroke="#6a6ade" stroke-width="1.8"/>
<path d="M1826.2 274L1876.6 286.2" stroke="#ee8a90" stroke-width="1.8"/>
<text transform="matrix(1 0.13 0.02 1 1830 257.4)" font-family="Liberation Sans, sans-serif" font-size="12.2" fill="#858585" textLength="30.5" lengthAdjust="spacingAndGlyphs" font-weight="bold">FRONT</text>
<text transform="matrix(0.62 -0.52 0 1 1872.6 258)" font-family="Liberation Sans, sans-serif" font-size="9" fill="#8a8a8a" textLength="20" lengthAdjust="spacingAndGlyphs" font-weight="bold">RIGHT</text>
<text transform="matrix(1 0.06 -0.8 0.42 1852 229.4)" font-family="Liberation Sans, sans-serif" font-size="9" fill="#a5a5a5" textLength="14" lengthAdjust="spacingAndGlyphs" font-weight="bold">TOP</text>
<text x="1815.6" y="216.8" font-family="Liberation Sans, sans-serif" font-size="13.6" fill="#6f6fe6" font-weight="bold" textLength="8" lengthAdjust="spacingAndGlyphs">Z</text>
<text x="1878.2" y="293.8" font-family="Liberation Sans, sans-serif" font-size="13.6" fill="#f09096" font-weight="bold" textLength="8" lengthAdjust="spacingAndGlyphs">X</text>
</svg><div class="abs" style="left:814px;top:985.6px;width:296.2px;height:28.6px;background:#eeeeee;opacity:.96"></div>
<svg class="abs" style="left:810px;top:980px" width="305" height="40" viewBox="810 980 305 40">
<defs><linearGradient id="gg" x1="0" y1="0" x2="0" y2="1"><stop offset="0" stop-color="#f4f4f4"/><stop offset="1" stop-color="#8e8e8e"/></linearGradient><linearGradient id="mg" x1="0" y1="0" x2="1" y2="1"><stop offset="0" stop-color="#a9c4ec"/><stop offset="1" stop-color="#7f9fd6"/></linearGradient></defs>
<path d="M844.3 997.0H850.9L847.6 1001.6Z" fill="#222"/>
<path d="M982.2 997.0H988.8L985.5 1001.6Z" fill="#222"/>
<path d="M1020.0 997.0H1026.6L1023.3 1001.6Z" fill="#222"/>
<path d="M1059.0 997.0H1065.6L1062.3 1001.6Z" fill="#222"/>
<path d="M1097.4 997.0H1104.0L1100.7 1001.6Z" fill="#222"/>
<ellipse cx="827.5" cy="998.7" rx="9.2" ry="4.4" fill="#f4f8ff" stroke="#555" stroke-width="1"/>
<ellipse cx="827.5" cy="998.7" rx="4.2" ry="9.2" fill="#e9f1fd" fill-opacity=".8" stroke="#555" stroke-width="1"/>
<path d="M826 998.4H829.4M827.7 996.7V1000.1" stroke="#2f6ec2" stroke-width="1"/>
<path d="M833.4 993.6L835.6 995.8L832.6 996.4Z" fill="#333"/><path d="M823.6 1004.6L826.4 1005.8L823.6 1007.4Z" fill="#333"/>
<path d="M818.4 997.4V1000" stroke="#eeeeee" stroke-width="1.6"/>
<path d="M860.6 996.6H876.2V1007.4H860.6Z" fill="#d8d8d8" stroke="#666" stroke-width="1.1"/>
<rect x="863" y="999.2" width="10.8" height="5.8" fill="#a9a9a9" stroke="#555" stroke-width=".9"/>
<path d="M860.6 996.6L863.6 992.8L864.6 994.4L872.6 991.8L876.2 996.6Z" fill="#9a9a9a" stroke="#666" stroke-width=".8" stroke-linejoin="round"/>
<path d="M894.2 998.6Q892.4 997.2 892 998.6Q893.6 1003.6 897.4 1007.8Q902 1009.6 906.6 1007.8Q909.6 1003 910.4 995.6Q909.2 994.4 908.4 995.8L907.6 998.6V992.4Q906.4 991 905.6 992.4V997.8V991Q904.4 989.6 903.4 991V997.6V991.8Q902.2 990.4 901.2 991.8V998.4L900.2 993.4Q899 992.2 898.2 993.6L899 1001.4Q896.6 1000 894.2 998.6Z" fill="#fafafa" stroke="#4a4a4a" stroke-width="1" stroke-linejoin="round"/>
<circle cx="930.3" cy="995.9" r="5.7" fill="#fbfbfb" stroke="#555" stroke-width="1.2"/>
<path d="M934.6 1000.2L941.6 1007" stroke="#3c3c3c" stroke-width="2.6" stroke-linecap="round"/>
<path d="M938.8 991.2H942.6M940.7 989.4V993M938.8 995.4H942.6" stroke="#333" stroke-width="1"/>
<circle cx="962.8" cy="996.7" r="5.9" fill="#fbfbfb" stroke="#555" stroke-width="1.2"/>
<rect x="959.8" y="993.8" width="6" height="5.6" fill="#e6e6e6" stroke="#666" stroke-width=".9"/>
<path d="M967.2 1001.2L974 1007.2" stroke="#3c3c3c" stroke-width="2.6" stroke-linecap="round"/>
<rect x="998.6" y="989.8" width="17.6" height="14.4" fill="#e4e4e4" stroke="#6a6a6a" stroke-width="1"/>
<rect x="1000.4" y="991.4" width="14" height="11" fill="url(#mg)"/>
<path d="M1005.6 1004.4H1009.4V1006H1005.6Z" fill="#8a8a8a"/><ellipse cx="1007.5" cy="1007.2" rx="5.4" ry="1.4" fill="#9a9a9a"/>
<rect x="1036.6" y="990.4" width="17.8" height="17.8" fill="url(#gg)" stroke="#5c5c5c" stroke-width="1"/>
<path d="M1041 990.4V1008.2M1045.5 990.4V1008.2M1050 990.4V1008.2M1036.6 994.8H1054.4M1036.6 999.3H1054.4M1036.6 1003.8H1054.4" stroke="#5c5c5c" stroke-width=".9"/>
<rect x="1075.2" y="991.2" width="18.2" height="15.6" fill="#7fa3dc" stroke="#4a72b4" stroke-width="1"/>
<path d="M1084.3 991.2V1006.8M1075.2 999H1093.4" stroke="#4a72b4" stroke-width="1.4"/>
<path d="M1076.2 992.2H1083.4M1085.4 992.2H1092.4" stroke="#a9c4ec" stroke-width="1"/>
</svg></div>
</div>
<div id="bottom" class="abs">
<svg class="abs" style="left:0;top:-1px" width="1920" height="58" viewBox="0 1022 1920 58">
<defs><radialGradient id="bs" cx=".4" cy=".3" r=".8"><stop offset="0" stop-color="#8fd0fb"/><stop offset="1" stop-color="#4ea6ee"/></radialGradient></defs>
<path d="M14.4 1046.8H17.2V1061.6H14.4ZM29 1046.8V1061.6L18.2 1054.2Z" fill="#4a4a4a"/>
<path d="M57 1047.4V1061.2L45.6 1054.3ZM58.6 1051.2H61.2V1057.4H58.6Z" fill="#4a4a4a"/>
<path d="M77.4 1045.2V1063L92.4 1054.1Z" fill="#4a4a4a"/>
<path d="M111.6 1047.4V1061.2L123 1054.3ZM107.4 1051.2H110V1057.4H107.4Z" fill="#4a4a4a"/>
<path d="M150.4 1046.8H153.2V1061.6H150.4ZM138.6 1046.8V1061.6L149.4 1054.2Z" fill="#4a4a4a"/>
<rect x="181" y="1032.9" width="84.6" height="7.6" fill="#fbabae"/>
<path d="M245.4 1038.4L249 1032.6M250.6 1038.4L254.2 1032.6M255.8 1038.4L259.4 1032.6" stroke="#6e2020" stroke-width="1.9"/>
<circle cx="194.1" cy="1053.1" r="10.2" fill="url(#bs)"/><ellipse cx="194" cy="1058.4" rx="8" ry="3.6" fill="#3f96e2" opacity=".35"/>
<path d="M223.9 1046V1060M216.9 1053H230.9" stroke="#222" stroke-width="2"/>
<path d="M223.9 1043.2L228.1 1048.4H219.7ZM223.9 1062.8L228.1 1057.6H219.7ZM214.1 1053L219.3 1048.8V1057.2ZM233.7 1053L228.5 1048.8V1057.2Z" fill="#222"/>
<path d="M244.6 1045.2V1052.8Q244.6 1054.6 248.4 1054.6Q252.2 1054.6 252.2 1052.8V1045.2Q252.2 1043.4 248.4 1043.4Q244.6 1043.4 244.6 1045.2Z" fill="#e4e4e4" stroke="#7d7d7d" stroke-width="1"/>
<path d="M254.6 1052.600H262.6L264 1054.2V1060.6L262.400 1062.6H254.800L253.200 1060.6V1054.2Z" fill="#dcc066" stroke="#b39535" stroke-width=".8"/>
<path d="M253.4 1057.4H264M256.400 1052.8V1062.4M260.8 1052.8V1062.4" stroke="#b39535" stroke-width=".6"/>
<path d="M246.6 1058V1060.800H249.6" fill="none" stroke="#2b2b2b" stroke-width="1"/><path d="M249.200 1059L251.600 1060.8L249.200 1062.600Z" fill="#2b2b2b"/>
<path d="M261.3 1036.3H276V1039.8Q275.4 1042.6 271.2 1044.6H266.1Q261.9 1042.6 261.3 1039.8Z" fill="#575757"/>
<rect x="266.9" y="1044" width="3.1" height="32" fill="#575757"/>
<path d="M195.1 1066.9V1074.4H253.6V1066.9M223.6 1066.9V1074.4" fill="none" stroke="#c6c6c6" stroke-width="2.2"/>
<path d="M1900.81 1051.57L1903.48 1051.70L1903.48 1054.70L1900.81 1054.83L1899.97 1056.86L1901.77 1058.84L1899.64 1060.97L1897.66 1059.17L1895.63 1060.01L1895.50 1062.68L1892.50 1062.68L1892.37 1060.01L1890.34 1059.17L1888.36 1060.97L1886.23 1058.84L1888.03 1056.86L1887.19 1054.83L1884.52 1054.70L1884.52 1051.70L1887.19 1051.57L1888.03 1049.54L1886.23 1047.56L1888.36 1045.43L1890.34 1047.23L1892.37 1046.39L1892.50 1043.72L1895.50 1043.72L1895.63 1046.39L1897.66 1047.23L1899.64 1045.43L1901.77 1047.56L1899.97 1049.54ZM1897.30 1053.20A3.30 3.30 0 1 0 1890.70 1053.20A3.30 3.30 0 1 0 1897.30 1053.20Z" fill="#7d7d7d" fill-rule="evenodd"/><circle cx="1894.00" cy="1053.20" r="5.15" fill="none" stroke="#7d7d7d" stroke-width="3.70"/>
</svg>
</div>
</div></div>
</body></html>
